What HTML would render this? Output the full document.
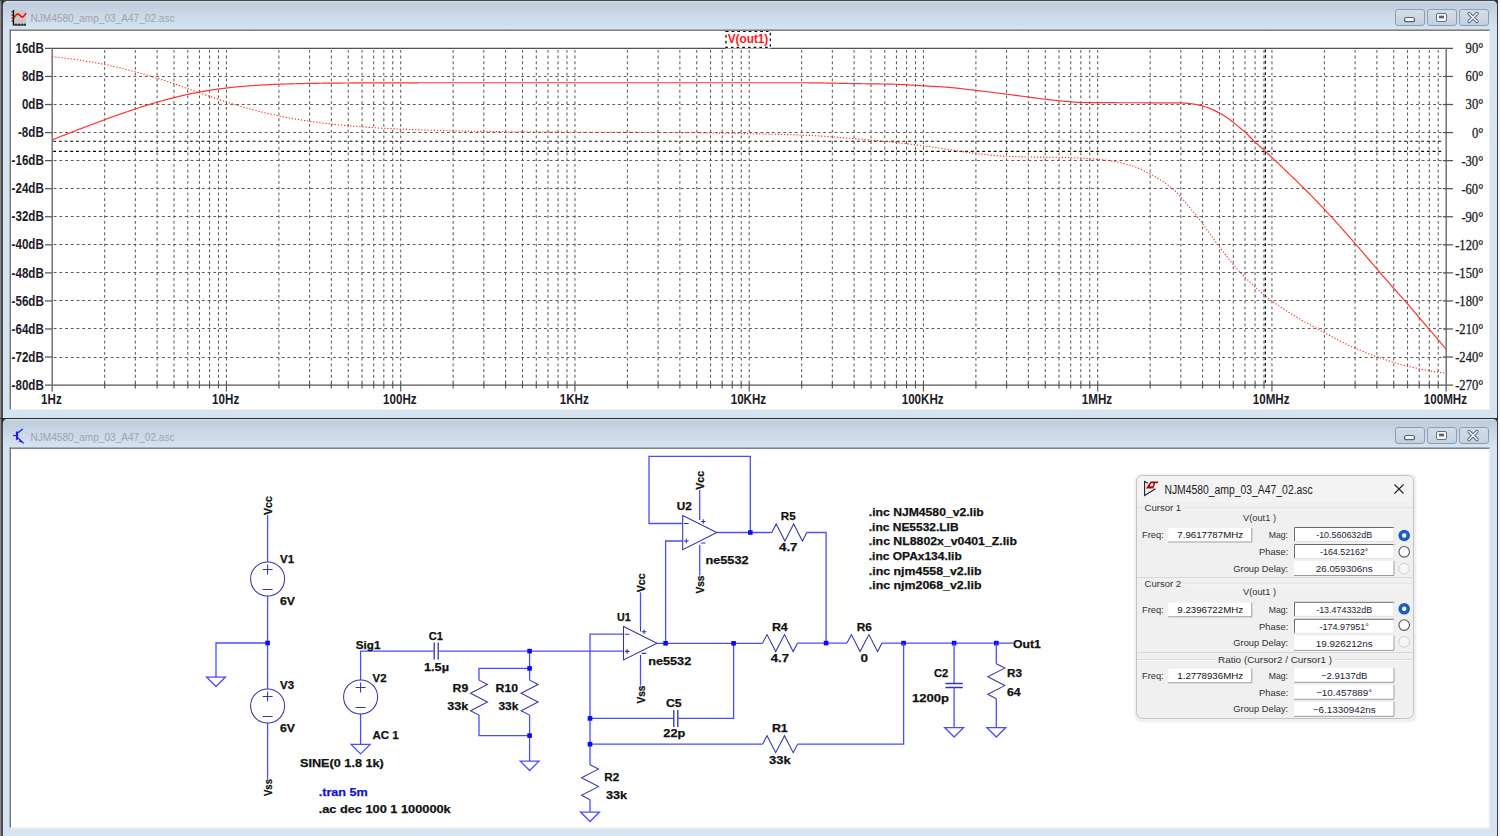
<!DOCTYPE html><html><head><meta charset="utf-8"><style>html,body{margin:0;padding:0;background:#d6e3f1;overflow:hidden}svg{display:block}text{font-family:"Liberation Sans",sans-serif}.b{font-weight:bold}.sf{font-family:"Liberation Serif",serif}</style></head><body>
<svg width="1500" height="836" viewBox="0 0 1500 836">
<defs>
<linearGradient id="tb" x1="0" y1="0" x2="0" y2="1"><stop offset="0" stop-color="#bccbdb"/><stop offset="1" stop-color="#d7e4f2"/></linearGradient>
<linearGradient id="btn" x1="0" y1="0" x2="0" y2="1"><stop offset="0" stop-color="#d3dde8"/><stop offset="1" stop-color="#c2d0df"/></linearGradient>
</defs>
<rect x="0" y="0" width="1500" height="836" fill="#d6e3f1"/>
<rect x="0" y="0" width="1" height="836" fill="#8a8a8a"/><rect x="1" y="0" width="2" height="836" fill="#4a4a4a"/>
<rect x="1497" y="0" width="1" height="836" fill="#3a3a3a"/><rect x="1498" y="0" width="2" height="836" fill="#f4f6f8"/>
<rect x="0" y="0" width="1498" height="1.2" fill="#474747"/>
<rect x="2" y="0.5" width="4" height="4" fill="#2a2a2a"/><rect x="1494" y="0.5" width="3.5" height="4" fill="#2a2a2a"/>
<rect x="3" y="1" width="1494" height="29" rx="4" fill="url(#tb)"/>
<rect x="6" y="1.3" width="1488" height="1" fill="#dce5ef"/>
<rect x="1395.5" y="9.5" width="29" height="16" rx="2.5" fill="url(#btn)" stroke="#8f9db3" stroke-width="1"/>
<rect x="1427.5" y="9.5" width="29" height="16" rx="2.5" fill="url(#btn)" stroke="#8f9db3" stroke-width="1"/>
<rect x="1459.5" y="9.5" width="29" height="16" rx="2.5" fill="url(#btn)" stroke="#8f9db3" stroke-width="1"/>
<rect x="1404.5" y="17.5" width="10" height="4.2" rx="2" fill="#f4f6f8" stroke="#5a6270" stroke-width="1.2"/>
<rect x="1436.5" y="13.5" width="10" height="8" rx="1.5" fill="#f4f6f8" stroke="#5a6270" stroke-width="0.9"/><rect x="1439" y="15.7" width="5" height="2.6" fill="#5a6270"/>
<path d="M1469 13.5 L1477 21.5 M1477 13.5 L1469 21.5" stroke="#5a6270" stroke-width="3.2" stroke-linecap="round"/><path d="M1469 13.5 L1477 21.5 M1477 13.5 L1469 21.5" stroke="#f4f6f8" stroke-width="1.6" stroke-linecap="round"/>
<text x="30.5" y="22" font-size="11.6" fill="#9ea3ad" textLength="144" lengthAdjust="spacingAndGlyphs">NJM4580_amp_03_A47_02.asc</text>
<g><rect x="12" y="10" width="14" height="15" fill="#c8c8c8"/><path d="M13.5 10 V25 H26" stroke="#000" stroke-width="1.2" fill="none"/><path d="M11.5 12h2M11.5 15h2M11.5 18h2M11.5 21h2M16 23.5v2M19 23.5v2M22 23.5v2M25 23.5v2" stroke="#000" stroke-width="1"/><path d="M13.8 18 C16 14,18 13,20 15.5 S24 17,26 13" stroke="#f00" stroke-width="1.6" fill="none"/></g>
<rect x="10" y="30" width="1480" height="380" fill="#ffffff"/>
<rect x="9.6" y="29.5" width="1480" height="1.4" fill="#747474"/><rect x="9.6" y="29.5" width="1.4" height="380" fill="#747474"/>
<rect x="1489" y="31" width="1" height="379" fill="#f0f0f0"/><rect x="11" y="409" width="1479" height="1" fill="#f0f0f0"/>
<rect x="0" y="418" width="1498" height="1" fill="#2e2e2e"/>
<rect x="2" y="418.5" width="4" height="4" fill="#2a2a2a"/><rect x="1494" y="418.5" width="3.5" height="4" fill="#2a2a2a"/>
<rect x="3" y="419" width="1494" height="29" rx="4" fill="url(#tb)"/>
<rect x="6" y="419.3" width="1488" height="1" fill="#dce5ef"/>
<rect x="1395.5" y="427.5" width="29" height="16" rx="2.5" fill="url(#btn)" stroke="#8f9db3" stroke-width="1"/>
<rect x="1427.5" y="427.5" width="29" height="16" rx="2.5" fill="url(#btn)" stroke="#8f9db3" stroke-width="1"/>
<rect x="1459.5" y="427.5" width="29" height="16" rx="2.5" fill="url(#btn)" stroke="#8f9db3" stroke-width="1"/>
<rect x="1404.5" y="435.5" width="10" height="4.2" rx="2" fill="#f4f6f8" stroke="#5a6270" stroke-width="1.2"/>
<rect x="1436.5" y="431.5" width="10" height="8" rx="1.5" fill="#f4f6f8" stroke="#5a6270" stroke-width="0.9"/><rect x="1439" y="433.7" width="5" height="2.6" fill="#5a6270"/>
<path d="M1469 431.5 L1477 439.5 M1477 431.5 L1469 439.5" stroke="#5a6270" stroke-width="3.2" stroke-linecap="round"/><path d="M1469 431.5 L1477 439.5 M1477 431.5 L1469 439.5" stroke="#f4f6f8" stroke-width="1.6" stroke-linecap="round"/>
<text x="30.5" y="440.6" font-size="11.6" fill="#9ea3ad" textLength="144" lengthAdjust="spacingAndGlyphs">NJM4580_amp_03_A47_02.asc</text>
<g stroke="#1a1aff" fill="none"><path d="M17 431.5 V439.8" stroke-width="2.2"/><path d="M13 435.5 H16" stroke-width="1.2"/><path d="M18 432.8 L22.8 429" stroke-width="1.2"/><path d="M18 438 L23.7 443.4" stroke-width="1.2"/></g><path d="M22.5 442.5 L18.6 441.8 L20.6 439.5 Z" fill="#1a1aff"/>
<rect x="10" y="448" width="1480" height="380" fill="#ffffff"/>
<rect x="9.6" y="447.5" width="1480" height="1.4" fill="#747474"/><rect x="9.6" y="447.5" width="1.4" height="380" fill="#747474"/>
<rect x="11" y="827" width="1479" height="2" fill="#efefef"/><rect x="1488.5" y="449" width="1.5" height="380" fill="#efefef"/>
<line x1="104.65" y1="49.9" x2="104.65" y2="385.1" stroke="#5c5c5c" stroke-width="1.05" stroke-dasharray="2.85 2.85"/>
<line x1="135.34" y1="49.9" x2="135.34" y2="385.1" stroke="#5c5c5c" stroke-width="1.05" stroke-dasharray="2.85 2.85"/>
<line x1="157.11" y1="49.9" x2="157.11" y2="385.1" stroke="#5c5c5c" stroke-width="1.05" stroke-dasharray="2.85 2.85"/>
<line x1="174.00" y1="49.9" x2="174.00" y2="385.1" stroke="#5c5c5c" stroke-width="1.05" stroke-dasharray="2.85 2.85"/>
<line x1="187.79" y1="49.9" x2="187.79" y2="385.1" stroke="#5c5c5c" stroke-width="1.05" stroke-dasharray="2.85 2.85"/>
<line x1="199.46" y1="49.9" x2="199.46" y2="385.1" stroke="#5c5c5c" stroke-width="1.05" stroke-dasharray="2.85 2.85"/>
<line x1="209.56" y1="49.9" x2="209.56" y2="385.1" stroke="#5c5c5c" stroke-width="1.05" stroke-dasharray="2.85 2.85"/>
<line x1="218.48" y1="49.9" x2="218.48" y2="385.1" stroke="#5c5c5c" stroke-width="1.05" stroke-dasharray="2.85 2.85"/>
<line x1="226.45" y1="49.9" x2="226.45" y2="385.1" stroke="#5c5c5c" stroke-width="1.05" stroke-dasharray="2.85 2.85"/>
<line x1="278.90" y1="49.9" x2="278.90" y2="385.1" stroke="#5c5c5c" stroke-width="1.05" stroke-dasharray="2.85 2.85"/>
<line x1="309.59" y1="49.9" x2="309.59" y2="385.1" stroke="#5c5c5c" stroke-width="1.05" stroke-dasharray="2.85 2.85"/>
<line x1="331.36" y1="49.9" x2="331.36" y2="385.1" stroke="#5c5c5c" stroke-width="1.05" stroke-dasharray="2.85 2.85"/>
<line x1="348.25" y1="49.9" x2="348.25" y2="385.1" stroke="#5c5c5c" stroke-width="1.05" stroke-dasharray="2.85 2.85"/>
<line x1="362.04" y1="49.9" x2="362.04" y2="385.1" stroke="#5c5c5c" stroke-width="1.05" stroke-dasharray="2.85 2.85"/>
<line x1="373.71" y1="49.9" x2="373.71" y2="385.1" stroke="#5c5c5c" stroke-width="1.05" stroke-dasharray="2.85 2.85"/>
<line x1="383.81" y1="49.9" x2="383.81" y2="385.1" stroke="#5c5c5c" stroke-width="1.05" stroke-dasharray="2.85 2.85"/>
<line x1="392.73" y1="49.9" x2="392.73" y2="385.1" stroke="#5c5c5c" stroke-width="1.05" stroke-dasharray="2.85 2.85"/>
<line x1="400.70" y1="49.9" x2="400.70" y2="385.1" stroke="#5c5c5c" stroke-width="1.05" stroke-dasharray="2.85 2.85"/>
<line x1="453.15" y1="49.9" x2="453.15" y2="385.1" stroke="#5c5c5c" stroke-width="1.05" stroke-dasharray="2.85 2.85"/>
<line x1="483.84" y1="49.9" x2="483.84" y2="385.1" stroke="#5c5c5c" stroke-width="1.05" stroke-dasharray="2.85 2.85"/>
<line x1="505.61" y1="49.9" x2="505.61" y2="385.1" stroke="#5c5c5c" stroke-width="1.05" stroke-dasharray="2.85 2.85"/>
<line x1="522.50" y1="49.9" x2="522.50" y2="385.1" stroke="#5c5c5c" stroke-width="1.05" stroke-dasharray="2.85 2.85"/>
<line x1="536.29" y1="49.9" x2="536.29" y2="385.1" stroke="#5c5c5c" stroke-width="1.05" stroke-dasharray="2.85 2.85"/>
<line x1="547.96" y1="49.9" x2="547.96" y2="385.1" stroke="#5c5c5c" stroke-width="1.05" stroke-dasharray="2.85 2.85"/>
<line x1="558.06" y1="49.9" x2="558.06" y2="385.1" stroke="#5c5c5c" stroke-width="1.05" stroke-dasharray="2.85 2.85"/>
<line x1="566.98" y1="49.9" x2="566.98" y2="385.1" stroke="#5c5c5c" stroke-width="1.05" stroke-dasharray="2.85 2.85"/>
<line x1="574.95" y1="49.9" x2="574.95" y2="385.1" stroke="#5c5c5c" stroke-width="1.05" stroke-dasharray="2.85 2.85"/>
<line x1="627.40" y1="49.9" x2="627.40" y2="385.1" stroke="#5c5c5c" stroke-width="1.05" stroke-dasharray="2.85 2.85"/>
<line x1="658.09" y1="49.9" x2="658.09" y2="385.1" stroke="#5c5c5c" stroke-width="1.05" stroke-dasharray="2.85 2.85"/>
<line x1="679.86" y1="49.9" x2="679.86" y2="385.1" stroke="#5c5c5c" stroke-width="1.05" stroke-dasharray="2.85 2.85"/>
<line x1="696.75" y1="49.9" x2="696.75" y2="385.1" stroke="#5c5c5c" stroke-width="1.05" stroke-dasharray="2.85 2.85"/>
<line x1="710.54" y1="49.9" x2="710.54" y2="385.1" stroke="#5c5c5c" stroke-width="1.05" stroke-dasharray="2.85 2.85"/>
<line x1="722.21" y1="49.9" x2="722.21" y2="385.1" stroke="#5c5c5c" stroke-width="1.05" stroke-dasharray="2.85 2.85"/>
<line x1="732.31" y1="49.9" x2="732.31" y2="385.1" stroke="#5c5c5c" stroke-width="1.05" stroke-dasharray="2.85 2.85"/>
<line x1="741.23" y1="49.9" x2="741.23" y2="385.1" stroke="#5c5c5c" stroke-width="1.05" stroke-dasharray="2.85 2.85"/>
<line x1="749.20" y1="49.9" x2="749.20" y2="385.1" stroke="#5c5c5c" stroke-width="1.05" stroke-dasharray="2.85 2.85"/>
<line x1="801.65" y1="49.9" x2="801.65" y2="385.1" stroke="#5c5c5c" stroke-width="1.05" stroke-dasharray="2.85 2.85"/>
<line x1="832.34" y1="49.9" x2="832.34" y2="385.1" stroke="#5c5c5c" stroke-width="1.05" stroke-dasharray="2.85 2.85"/>
<line x1="854.11" y1="49.9" x2="854.11" y2="385.1" stroke="#5c5c5c" stroke-width="1.05" stroke-dasharray="2.85 2.85"/>
<line x1="871.00" y1="49.9" x2="871.00" y2="385.1" stroke="#5c5c5c" stroke-width="1.05" stroke-dasharray="2.85 2.85"/>
<line x1="884.79" y1="49.9" x2="884.79" y2="385.1" stroke="#5c5c5c" stroke-width="1.05" stroke-dasharray="2.85 2.85"/>
<line x1="896.46" y1="49.9" x2="896.46" y2="385.1" stroke="#5c5c5c" stroke-width="1.05" stroke-dasharray="2.85 2.85"/>
<line x1="906.56" y1="49.9" x2="906.56" y2="385.1" stroke="#5c5c5c" stroke-width="1.05" stroke-dasharray="2.85 2.85"/>
<line x1="915.48" y1="49.9" x2="915.48" y2="385.1" stroke="#5c5c5c" stroke-width="1.05" stroke-dasharray="2.85 2.85"/>
<line x1="923.45" y1="49.9" x2="923.45" y2="385.1" stroke="#5c5c5c" stroke-width="1.05" stroke-dasharray="2.85 2.85"/>
<line x1="975.90" y1="49.9" x2="975.90" y2="385.1" stroke="#5c5c5c" stroke-width="1.05" stroke-dasharray="2.85 2.85"/>
<line x1="1006.59" y1="49.9" x2="1006.59" y2="385.1" stroke="#5c5c5c" stroke-width="1.05" stroke-dasharray="2.85 2.85"/>
<line x1="1028.36" y1="49.9" x2="1028.36" y2="385.1" stroke="#5c5c5c" stroke-width="1.05" stroke-dasharray="2.85 2.85"/>
<line x1="1045.25" y1="49.9" x2="1045.25" y2="385.1" stroke="#5c5c5c" stroke-width="1.05" stroke-dasharray="2.85 2.85"/>
<line x1="1059.04" y1="49.9" x2="1059.04" y2="385.1" stroke="#5c5c5c" stroke-width="1.05" stroke-dasharray="2.85 2.85"/>
<line x1="1070.71" y1="49.9" x2="1070.71" y2="385.1" stroke="#5c5c5c" stroke-width="1.05" stroke-dasharray="2.85 2.85"/>
<line x1="1080.81" y1="49.9" x2="1080.81" y2="385.1" stroke="#5c5c5c" stroke-width="1.05" stroke-dasharray="2.85 2.85"/>
<line x1="1089.73" y1="49.9" x2="1089.73" y2="385.1" stroke="#5c5c5c" stroke-width="1.05" stroke-dasharray="2.85 2.85"/>
<line x1="1097.70" y1="49.9" x2="1097.70" y2="385.1" stroke="#5c5c5c" stroke-width="1.05" stroke-dasharray="2.85 2.85"/>
<line x1="1150.15" y1="49.9" x2="1150.15" y2="385.1" stroke="#5c5c5c" stroke-width="1.05" stroke-dasharray="2.85 2.85"/>
<line x1="1180.84" y1="49.9" x2="1180.84" y2="385.1" stroke="#5c5c5c" stroke-width="1.05" stroke-dasharray="2.85 2.85"/>
<line x1="1202.61" y1="49.9" x2="1202.61" y2="385.1" stroke="#5c5c5c" stroke-width="1.05" stroke-dasharray="2.85 2.85"/>
<line x1="1219.50" y1="49.9" x2="1219.50" y2="385.1" stroke="#5c5c5c" stroke-width="1.05" stroke-dasharray="2.85 2.85"/>
<line x1="1233.29" y1="49.9" x2="1233.29" y2="385.1" stroke="#5c5c5c" stroke-width="1.05" stroke-dasharray="2.85 2.85"/>
<line x1="1244.96" y1="49.9" x2="1244.96" y2="385.1" stroke="#5c5c5c" stroke-width="1.05" stroke-dasharray="2.85 2.85"/>
<line x1="1255.06" y1="49.9" x2="1255.06" y2="385.1" stroke="#5c5c5c" stroke-width="1.05" stroke-dasharray="2.85 2.85"/>
<line x1="1263.98" y1="49.9" x2="1263.98" y2="385.1" stroke="#5c5c5c" stroke-width="1.05" stroke-dasharray="2.85 2.85"/>
<line x1="1271.95" y1="49.9" x2="1271.95" y2="385.1" stroke="#5c5c5c" stroke-width="1.05" stroke-dasharray="2.85 2.85"/>
<line x1="1324.40" y1="49.9" x2="1324.40" y2="385.1" stroke="#5c5c5c" stroke-width="1.05" stroke-dasharray="2.85 2.85"/>
<line x1="1355.09" y1="49.9" x2="1355.09" y2="385.1" stroke="#5c5c5c" stroke-width="1.05" stroke-dasharray="2.85 2.85"/>
<line x1="1376.86" y1="49.9" x2="1376.86" y2="385.1" stroke="#5c5c5c" stroke-width="1.05" stroke-dasharray="2.85 2.85"/>
<line x1="1393.75" y1="49.9" x2="1393.75" y2="385.1" stroke="#5c5c5c" stroke-width="1.05" stroke-dasharray="2.85 2.85"/>
<line x1="1407.54" y1="49.9" x2="1407.54" y2="385.1" stroke="#5c5c5c" stroke-width="1.05" stroke-dasharray="2.85 2.85"/>
<line x1="1419.21" y1="49.9" x2="1419.21" y2="385.1" stroke="#5c5c5c" stroke-width="1.05" stroke-dasharray="2.85 2.85"/>
<line x1="1429.31" y1="49.9" x2="1429.31" y2="385.1" stroke="#5c5c5c" stroke-width="1.05" stroke-dasharray="2.85 2.85"/>
<line x1="1438.23" y1="49.9" x2="1438.23" y2="385.1" stroke="#5c5c5c" stroke-width="1.05" stroke-dasharray="2.85 2.85"/>
<line x1="53.7" y1="76.50" x2="1446.2" y2="76.50" stroke="#5c5c5c" stroke-width="1.05" stroke-dasharray="2.85 2.85"/>
<line x1="53.7" y1="104.50" x2="1446.2" y2="104.50" stroke="#5c5c5c" stroke-width="1.05" stroke-dasharray="2.85 2.85"/>
<line x1="53.7" y1="132.50" x2="1446.2" y2="132.50" stroke="#5c5c5c" stroke-width="1.05" stroke-dasharray="2.85 2.85"/>
<line x1="53.7" y1="160.50" x2="1446.2" y2="160.50" stroke="#5c5c5c" stroke-width="1.05" stroke-dasharray="2.85 2.85"/>
<line x1="53.7" y1="188.50" x2="1446.2" y2="188.50" stroke="#5c5c5c" stroke-width="1.05" stroke-dasharray="2.85 2.85"/>
<line x1="53.7" y1="216.50" x2="1446.2" y2="216.50" stroke="#5c5c5c" stroke-width="1.05" stroke-dasharray="2.85 2.85"/>
<line x1="53.7" y1="244.50" x2="1446.2" y2="244.50" stroke="#5c5c5c" stroke-width="1.05" stroke-dasharray="2.85 2.85"/>
<line x1="53.7" y1="272.50" x2="1446.2" y2="272.50" stroke="#5c5c5c" stroke-width="1.05" stroke-dasharray="2.85 2.85"/>
<line x1="53.7" y1="300.50" x2="1446.2" y2="300.50" stroke="#5c5c5c" stroke-width="1.05" stroke-dasharray="2.85 2.85"/>
<line x1="53.7" y1="328.50" x2="1446.2" y2="328.50" stroke="#5c5c5c" stroke-width="1.05" stroke-dasharray="2.85 2.85"/>
<line x1="53.7" y1="357.50" x2="1446.2" y2="357.50" stroke="#5c5c5c" stroke-width="1.05" stroke-dasharray="2.85 2.85"/>
<line x1="53.2" y1="141.2" x2="1442.7" y2="141.2" stroke="#000" stroke-width="1.1" stroke-dasharray="2.85 2.85"/>
<line x1="53.2" y1="151.4" x2="1442.7" y2="151.4" stroke="#000" stroke-width="1.1" stroke-dasharray="2.85 2.85"/>
<line x1="1265.4" y1="49.4" x2="1265.4" y2="385.1" stroke="#000" stroke-width="1.1" stroke-dasharray="2.85 2.85"/>
<line x1="45" y1="48.4" x2="1453" y2="48.4" stroke="#555555" stroke-width="1.3"/>
<line x1="45" y1="385.1" x2="1453" y2="385.1" stroke="#555555" stroke-width="1.3"/>
<line x1="52.2" y1="48.4" x2="52.2" y2="391.5" stroke="#737373" stroke-width="1.5"/>
<line x1="1446.2" y1="48.4" x2="1446.2" y2="391.5" stroke="#737373" stroke-width="1.5"/>
<line x1="45" y1="76.46" x2="52.2" y2="76.46" stroke="#555555" stroke-width="1.25"/>
<line x1="1443" y1="76.46" x2="1453" y2="76.46" stroke="#555555" stroke-width="1.25"/>
<line x1="45" y1="104.52" x2="52.2" y2="104.52" stroke="#555555" stroke-width="1.25"/>
<line x1="1443" y1="104.52" x2="1453" y2="104.52" stroke="#555555" stroke-width="1.25"/>
<line x1="45" y1="132.58" x2="52.2" y2="132.58" stroke="#555555" stroke-width="1.25"/>
<line x1="1443" y1="132.58" x2="1453" y2="132.58" stroke="#555555" stroke-width="1.25"/>
<line x1="45" y1="160.63" x2="52.2" y2="160.63" stroke="#555555" stroke-width="1.25"/>
<line x1="1443" y1="160.63" x2="1453" y2="160.63" stroke="#555555" stroke-width="1.25"/>
<line x1="45" y1="188.69" x2="52.2" y2="188.69" stroke="#555555" stroke-width="1.25"/>
<line x1="1443" y1="188.69" x2="1453" y2="188.69" stroke="#555555" stroke-width="1.25"/>
<line x1="45" y1="216.75" x2="52.2" y2="216.75" stroke="#555555" stroke-width="1.25"/>
<line x1="1443" y1="216.75" x2="1453" y2="216.75" stroke="#555555" stroke-width="1.25"/>
<line x1="45" y1="244.81" x2="52.2" y2="244.81" stroke="#555555" stroke-width="1.25"/>
<line x1="1443" y1="244.81" x2="1453" y2="244.81" stroke="#555555" stroke-width="1.25"/>
<line x1="45" y1="272.87" x2="52.2" y2="272.87" stroke="#555555" stroke-width="1.25"/>
<line x1="1443" y1="272.87" x2="1453" y2="272.87" stroke="#555555" stroke-width="1.25"/>
<line x1="45" y1="300.93" x2="52.2" y2="300.93" stroke="#555555" stroke-width="1.25"/>
<line x1="1443" y1="300.93" x2="1453" y2="300.93" stroke="#555555" stroke-width="1.25"/>
<line x1="45" y1="328.98" x2="52.2" y2="328.98" stroke="#555555" stroke-width="1.25"/>
<line x1="1443" y1="328.98" x2="1453" y2="328.98" stroke="#555555" stroke-width="1.25"/>
<line x1="45" y1="357.04" x2="52.2" y2="357.04" stroke="#555555" stroke-width="1.25"/>
<line x1="1443" y1="357.04" x2="1453" y2="357.04" stroke="#555555" stroke-width="1.25"/>
<line x1="104.65" y1="382.8" x2="104.65" y2="388.4" stroke="#555555" stroke-width="1.15"/>
<line x1="135.34" y1="382.8" x2="135.34" y2="388.4" stroke="#555555" stroke-width="1.15"/>
<line x1="157.11" y1="382.8" x2="157.11" y2="388.4" stroke="#555555" stroke-width="1.15"/>
<line x1="174.00" y1="382.8" x2="174.00" y2="388.4" stroke="#555555" stroke-width="1.15"/>
<line x1="187.79" y1="382.8" x2="187.79" y2="388.4" stroke="#555555" stroke-width="1.15"/>
<line x1="199.46" y1="382.8" x2="199.46" y2="388.4" stroke="#555555" stroke-width="1.15"/>
<line x1="209.56" y1="382.8" x2="209.56" y2="388.4" stroke="#555555" stroke-width="1.15"/>
<line x1="218.48" y1="382.8" x2="218.48" y2="388.4" stroke="#555555" stroke-width="1.15"/>
<line x1="226.45" y1="382.8" x2="226.45" y2="391.5" stroke="#555555" stroke-width="1.15"/>
<line x1="278.90" y1="382.8" x2="278.90" y2="388.4" stroke="#555555" stroke-width="1.15"/>
<line x1="309.59" y1="382.8" x2="309.59" y2="388.4" stroke="#555555" stroke-width="1.15"/>
<line x1="331.36" y1="382.8" x2="331.36" y2="388.4" stroke="#555555" stroke-width="1.15"/>
<line x1="348.25" y1="382.8" x2="348.25" y2="388.4" stroke="#555555" stroke-width="1.15"/>
<line x1="362.04" y1="382.8" x2="362.04" y2="388.4" stroke="#555555" stroke-width="1.15"/>
<line x1="373.71" y1="382.8" x2="373.71" y2="388.4" stroke="#555555" stroke-width="1.15"/>
<line x1="383.81" y1="382.8" x2="383.81" y2="388.4" stroke="#555555" stroke-width="1.15"/>
<line x1="392.73" y1="382.8" x2="392.73" y2="388.4" stroke="#555555" stroke-width="1.15"/>
<line x1="400.70" y1="382.8" x2="400.70" y2="391.5" stroke="#555555" stroke-width="1.15"/>
<line x1="453.15" y1="382.8" x2="453.15" y2="388.4" stroke="#555555" stroke-width="1.15"/>
<line x1="483.84" y1="382.8" x2="483.84" y2="388.4" stroke="#555555" stroke-width="1.15"/>
<line x1="505.61" y1="382.8" x2="505.61" y2="388.4" stroke="#555555" stroke-width="1.15"/>
<line x1="522.50" y1="382.8" x2="522.50" y2="388.4" stroke="#555555" stroke-width="1.15"/>
<line x1="536.29" y1="382.8" x2="536.29" y2="388.4" stroke="#555555" stroke-width="1.15"/>
<line x1="547.96" y1="382.8" x2="547.96" y2="388.4" stroke="#555555" stroke-width="1.15"/>
<line x1="558.06" y1="382.8" x2="558.06" y2="388.4" stroke="#555555" stroke-width="1.15"/>
<line x1="566.98" y1="382.8" x2="566.98" y2="388.4" stroke="#555555" stroke-width="1.15"/>
<line x1="574.95" y1="382.8" x2="574.95" y2="391.5" stroke="#555555" stroke-width="1.15"/>
<line x1="627.40" y1="382.8" x2="627.40" y2="388.4" stroke="#555555" stroke-width="1.15"/>
<line x1="658.09" y1="382.8" x2="658.09" y2="388.4" stroke="#555555" stroke-width="1.15"/>
<line x1="679.86" y1="382.8" x2="679.86" y2="388.4" stroke="#555555" stroke-width="1.15"/>
<line x1="696.75" y1="382.8" x2="696.75" y2="388.4" stroke="#555555" stroke-width="1.15"/>
<line x1="710.54" y1="382.8" x2="710.54" y2="388.4" stroke="#555555" stroke-width="1.15"/>
<line x1="722.21" y1="382.8" x2="722.21" y2="388.4" stroke="#555555" stroke-width="1.15"/>
<line x1="732.31" y1="382.8" x2="732.31" y2="388.4" stroke="#555555" stroke-width="1.15"/>
<line x1="741.23" y1="382.8" x2="741.23" y2="388.4" stroke="#555555" stroke-width="1.15"/>
<line x1="749.20" y1="382.8" x2="749.20" y2="391.5" stroke="#555555" stroke-width="1.15"/>
<line x1="801.65" y1="382.8" x2="801.65" y2="388.4" stroke="#555555" stroke-width="1.15"/>
<line x1="832.34" y1="382.8" x2="832.34" y2="388.4" stroke="#555555" stroke-width="1.15"/>
<line x1="854.11" y1="382.8" x2="854.11" y2="388.4" stroke="#555555" stroke-width="1.15"/>
<line x1="871.00" y1="382.8" x2="871.00" y2="388.4" stroke="#555555" stroke-width="1.15"/>
<line x1="884.79" y1="382.8" x2="884.79" y2="388.4" stroke="#555555" stroke-width="1.15"/>
<line x1="896.46" y1="382.8" x2="896.46" y2="388.4" stroke="#555555" stroke-width="1.15"/>
<line x1="906.56" y1="382.8" x2="906.56" y2="388.4" stroke="#555555" stroke-width="1.15"/>
<line x1="915.48" y1="382.8" x2="915.48" y2="388.4" stroke="#555555" stroke-width="1.15"/>
<line x1="923.45" y1="382.8" x2="923.45" y2="391.5" stroke="#555555" stroke-width="1.15"/>
<line x1="975.90" y1="382.8" x2="975.90" y2="388.4" stroke="#555555" stroke-width="1.15"/>
<line x1="1006.59" y1="382.8" x2="1006.59" y2="388.4" stroke="#555555" stroke-width="1.15"/>
<line x1="1028.36" y1="382.8" x2="1028.36" y2="388.4" stroke="#555555" stroke-width="1.15"/>
<line x1="1045.25" y1="382.8" x2="1045.25" y2="388.4" stroke="#555555" stroke-width="1.15"/>
<line x1="1059.04" y1="382.8" x2="1059.04" y2="388.4" stroke="#555555" stroke-width="1.15"/>
<line x1="1070.71" y1="382.8" x2="1070.71" y2="388.4" stroke="#555555" stroke-width="1.15"/>
<line x1="1080.81" y1="382.8" x2="1080.81" y2="388.4" stroke="#555555" stroke-width="1.15"/>
<line x1="1089.73" y1="382.8" x2="1089.73" y2="388.4" stroke="#555555" stroke-width="1.15"/>
<line x1="1097.70" y1="382.8" x2="1097.70" y2="391.5" stroke="#555555" stroke-width="1.15"/>
<line x1="1150.15" y1="382.8" x2="1150.15" y2="388.4" stroke="#555555" stroke-width="1.15"/>
<line x1="1180.84" y1="382.8" x2="1180.84" y2="388.4" stroke="#555555" stroke-width="1.15"/>
<line x1="1202.61" y1="382.8" x2="1202.61" y2="388.4" stroke="#555555" stroke-width="1.15"/>
<line x1="1219.50" y1="382.8" x2="1219.50" y2="388.4" stroke="#555555" stroke-width="1.15"/>
<line x1="1233.29" y1="382.8" x2="1233.29" y2="388.4" stroke="#555555" stroke-width="1.15"/>
<line x1="1244.96" y1="382.8" x2="1244.96" y2="388.4" stroke="#555555" stroke-width="1.15"/>
<line x1="1255.06" y1="382.8" x2="1255.06" y2="388.4" stroke="#555555" stroke-width="1.15"/>
<line x1="1263.98" y1="382.8" x2="1263.98" y2="388.4" stroke="#555555" stroke-width="1.15"/>
<line x1="1271.95" y1="382.8" x2="1271.95" y2="391.5" stroke="#555555" stroke-width="1.15"/>
<line x1="1324.40" y1="382.8" x2="1324.40" y2="388.4" stroke="#555555" stroke-width="1.15"/>
<line x1="1355.09" y1="382.8" x2="1355.09" y2="388.4" stroke="#555555" stroke-width="1.15"/>
<line x1="1376.86" y1="382.8" x2="1376.86" y2="388.4" stroke="#555555" stroke-width="1.15"/>
<line x1="1393.75" y1="382.8" x2="1393.75" y2="388.4" stroke="#555555" stroke-width="1.15"/>
<line x1="1407.54" y1="382.8" x2="1407.54" y2="388.4" stroke="#555555" stroke-width="1.15"/>
<line x1="1419.21" y1="382.8" x2="1419.21" y2="388.4" stroke="#555555" stroke-width="1.15"/>
<line x1="1429.31" y1="382.8" x2="1429.31" y2="388.4" stroke="#555555" stroke-width="1.15"/>
<line x1="1438.23" y1="382.8" x2="1438.23" y2="388.4" stroke="#555555" stroke-width="1.15"/>
<text class="b" x="15.5" y="53.0" font-size="13.8" fill="#1c1c28" textLength="28.3" lengthAdjust="spacingAndGlyphs">16dB</text>
<text class="b" x="21.9" y="81.1" font-size="13.8" fill="#1c1c28" textLength="21.9" lengthAdjust="spacingAndGlyphs">8dB</text>
<text class="b" x="21.9" y="109.1" font-size="13.8" fill="#1c1c28" textLength="21.9" lengthAdjust="spacingAndGlyphs">0dB</text>
<text class="b" x="18.0" y="137.2" font-size="13.8" fill="#1c1c28" textLength="25.8" lengthAdjust="spacingAndGlyphs">-8dB</text>
<text class="b" x="11.6" y="165.2" font-size="13.8" fill="#1c1c28" textLength="32.2" lengthAdjust="spacingAndGlyphs">-16dB</text>
<text class="b" x="11.6" y="193.3" font-size="13.8" fill="#1c1c28" textLength="32.2" lengthAdjust="spacingAndGlyphs">-24dB</text>
<text class="b" x="11.6" y="221.4" font-size="13.8" fill="#1c1c28" textLength="32.2" lengthAdjust="spacingAndGlyphs">-32dB</text>
<text class="b" x="11.6" y="249.4" font-size="13.8" fill="#1c1c28" textLength="32.2" lengthAdjust="spacingAndGlyphs">-40dB</text>
<text class="b" x="11.6" y="277.5" font-size="13.8" fill="#1c1c28" textLength="32.2" lengthAdjust="spacingAndGlyphs">-48dB</text>
<text class="b" x="11.6" y="305.5" font-size="13.8" fill="#1c1c28" textLength="32.2" lengthAdjust="spacingAndGlyphs">-56dB</text>
<text class="b" x="11.6" y="333.6" font-size="13.8" fill="#1c1c28" textLength="32.2" lengthAdjust="spacingAndGlyphs">-64dB</text>
<text class="b" x="11.6" y="361.6" font-size="13.8" fill="#1c1c28" textLength="32.2" lengthAdjust="spacingAndGlyphs">-72dB</text>
<text class="b" x="11.6" y="389.7" font-size="13.8" fill="#1c1c28" textLength="32.2" lengthAdjust="spacingAndGlyphs">-80dB</text>
<text class="sf" x="1465.6" y="53.3" font-size="13.8" fill="#1c1c28" stroke="#1c1c28" stroke-width="0.3" textLength="17.6" lengthAdjust="spacingAndGlyphs">90°</text>
<text class="sf" x="1465.6" y="81.4" font-size="13.8" fill="#1c1c28" stroke="#1c1c28" stroke-width="0.3" textLength="17.6" lengthAdjust="spacingAndGlyphs">60°</text>
<text class="sf" x="1465.6" y="109.4" font-size="13.8" fill="#1c1c28" stroke="#1c1c28" stroke-width="0.3" textLength="17.6" lengthAdjust="spacingAndGlyphs">30°</text>
<text class="sf" x="1471.9" y="137.5" font-size="13.8" fill="#1c1c28" stroke="#1c1c28" stroke-width="0.3" textLength="11.3" lengthAdjust="spacingAndGlyphs">0°</text>
<text class="sf" x="1461.4" y="165.5" font-size="13.8" fill="#1c1c28" stroke="#1c1c28" stroke-width="0.3" textLength="21.8" lengthAdjust="spacingAndGlyphs">-30°</text>
<text class="sf" x="1461.4" y="193.6" font-size="13.8" fill="#1c1c28" stroke="#1c1c28" stroke-width="0.3" textLength="21.8" lengthAdjust="spacingAndGlyphs">-60°</text>
<text class="sf" x="1461.4" y="221.7" font-size="13.8" fill="#1c1c28" stroke="#1c1c28" stroke-width="0.3" textLength="21.8" lengthAdjust="spacingAndGlyphs">-90°</text>
<text class="sf" x="1455.2" y="249.7" font-size="13.8" fill="#1c1c28" stroke="#1c1c28" stroke-width="0.3" textLength="28.0" lengthAdjust="spacingAndGlyphs">-120°</text>
<text class="sf" x="1455.2" y="277.8" font-size="13.8" fill="#1c1c28" stroke="#1c1c28" stroke-width="0.3" textLength="28.0" lengthAdjust="spacingAndGlyphs">-150°</text>
<text class="sf" x="1455.2" y="305.8" font-size="13.8" fill="#1c1c28" stroke="#1c1c28" stroke-width="0.3" textLength="28.0" lengthAdjust="spacingAndGlyphs">-180°</text>
<text class="sf" x="1455.2" y="333.9" font-size="13.8" fill="#1c1c28" stroke="#1c1c28" stroke-width="0.3" textLength="28.0" lengthAdjust="spacingAndGlyphs">-210°</text>
<text class="sf" x="1455.2" y="361.9" font-size="13.8" fill="#1c1c28" stroke="#1c1c28" stroke-width="0.3" textLength="28.0" lengthAdjust="spacingAndGlyphs">-240°</text>
<text class="sf" x="1455.2" y="390.0" font-size="13.8" fill="#1c1c28" stroke="#1c1c28" stroke-width="0.3" textLength="28.0" lengthAdjust="spacingAndGlyphs">-270°</text>
<text class="b" x="41.1" y="404.4" font-size="13.8" fill="#1c1c28" textLength="20.6" lengthAdjust="spacingAndGlyphs">1Hz</text>
<text class="b" x="212.1" y="404.4" font-size="13.8" fill="#1c1c28" textLength="27.1" lengthAdjust="spacingAndGlyphs">10Hz</text>
<text class="b" x="383.1" y="404.4" font-size="13.8" fill="#1c1c28" textLength="33.5" lengthAdjust="spacingAndGlyphs">100Hz</text>
<text class="b" x="559.7" y="404.4" font-size="13.8" fill="#1c1c28" textLength="29.0" lengthAdjust="spacingAndGlyphs">1KHz</text>
<text class="b" x="730.7" y="404.4" font-size="13.8" fill="#1c1c28" textLength="35.4" lengthAdjust="spacingAndGlyphs">10KHz</text>
<text class="b" x="901.7" y="404.4" font-size="13.8" fill="#1c1c28" textLength="41.9" lengthAdjust="spacingAndGlyphs">100KHz</text>
<text class="b" x="1081.8" y="404.4" font-size="13.8" fill="#1c1c28" textLength="30.3" lengthAdjust="spacingAndGlyphs">1MHz</text>
<text class="b" x="1252.8" y="404.4" font-size="13.8" fill="#1c1c28" textLength="36.7" lengthAdjust="spacingAndGlyphs">10MHz</text>
<text class="b" x="1423.8" y="404.4" font-size="13.8" fill="#1c1c28" textLength="43.2" lengthAdjust="spacingAndGlyphs">100MHz</text>
<path d="M52.2 56.67 L53.2 56.78 L54.2 56.89 L55.2 57.00 L56.2 57.11 L57.2 57.22 L58.2 57.34 L59.2 57.45 L60.2 57.57 L61.2 57.69 L62.2 57.81 L63.2 57.94 L64.2 58.06 L65.2 58.19 L66.2 58.31 L67.2 58.44 L68.2 58.57 L69.2 58.70 L70.2 58.84 L71.2 58.97 L72.2 59.11 L73.2 59.25 L74.2 59.39 L75.2 59.53 L76.2 59.67 L77.2 59.82 L78.2 59.97 L79.2 60.12 L80.2 60.27 L81.2 60.42 L82.2 60.57 L83.2 60.73 L84.2 60.89 L85.2 61.05 L86.2 61.21 L87.2 61.38 L88.2 61.54 L89.2 61.71 L90.2 61.88 L91.2 62.05 L92.2 62.22 L93.2 62.40 L94.2 62.58 L95.2 62.76 L96.2 62.94 L97.2 63.12 L98.2 63.31 L99.2 63.50 L100.2 63.69 L101.2 63.88 L102.2 64.07 L103.2 64.27 L104.2 64.47 L105.2 64.67 L106.2 64.87 L107.2 65.08 L108.2 65.29 L109.2 65.50 L110.2 65.71 L111.2 65.92 L112.2 66.14 L113.2 66.36 L114.2 66.58 L115.2 66.80 L116.2 67.03 L117.2 67.25 L118.2 67.49 L119.2 67.72 L120.2 67.95 L121.2 68.19 L122.2 68.43 L123.2 68.67 L124.2 68.92 L125.2 69.16 L126.2 69.41 L127.2 69.66 L128.2 69.92 L129.2 70.17 L130.2 70.43 L131.2 70.69 L132.2 70.95 L133.2 71.22 L134.2 71.49 L135.2 71.76 L136.2 72.03 L137.2 72.30 L138.2 72.58 L139.2 72.86 L140.2 73.14 L141.2 73.42 L142.2 73.71 L143.2 74.00 L144.2 74.29 L145.2 74.58 L146.2 74.87 L147.2 75.17 L148.2 75.47 L149.2 75.77 L150.2 76.07 L151.2 76.38 L152.2 76.69 L153.2 76.99 L154.2 77.31 L155.2 77.62 L156.2 77.93 L157.2 78.25 L158.2 78.57 L159.2 78.89 L160.2 79.21 L161.2 79.54 L162.2 79.86 L163.2 80.19 L164.2 80.52 L165.2 80.85 L166.2 81.18 L167.2 81.51 L168.2 81.85 L169.2 82.19 L170.2 82.52 L171.2 82.86 L172.2 83.20 L173.2 83.55 L174.2 83.89 L175.2 84.23 L176.2 84.58 L177.2 84.92 L178.2 85.27 L179.2 85.62 L180.2 85.97 L181.2 86.32 L182.2 86.67 L183.2 87.02 L184.2 87.37 L185.2 87.72 L186.2 88.07 L187.2 88.43 L188.2 88.78 L189.2 89.13 L190.2 89.49 L191.2 89.84 L192.2 90.19 L193.2 90.55 L194.2 90.90 L195.2 91.26 L196.2 91.61 L197.2 91.96 L198.2 92.32 L199.2 92.67 L200.2 93.02 L201.2 93.37 L202.2 93.73 L203.2 94.08 L204.2 94.43 L205.2 94.78 L206.2 95.13 L207.2 95.48 L208.2 95.82 L209.2 96.17 L210.2 96.51 L211.2 96.86 L212.2 97.20 L213.2 97.55 L214.2 97.89 L215.2 98.23 L216.2 98.57 L217.2 98.90 L218.2 99.24 L219.2 99.57 L220.2 99.91 L221.2 100.24 L222.2 100.57 L223.2 100.90 L224.2 101.22 L225.2 101.55 L226.2 101.87 L227.2 102.19 L228.2 102.51 L229.2 102.83 L230.2 103.15 L231.2 103.46 L232.2 103.78 L233.2 104.09 L234.2 104.39 L235.2 104.70 L236.2 105.00 L237.2 105.31 L238.2 105.61 L239.2 105.91 L240.2 106.20 L241.2 106.50 L242.2 106.79 L243.2 107.08 L244.2 107.36 L245.2 107.65 L246.2 107.93 L247.2 108.21 L248.2 108.49 L249.2 108.77 L250.2 109.04 L251.2 109.31 L252.2 109.58 L253.2 109.85 L254.2 110.11 L255.2 110.37 L256.2 110.63 L257.2 110.89 L258.2 111.15 L259.2 111.40 L260.2 111.65 L261.2 111.90 L262.2 112.14 L263.2 112.39 L264.2 112.63 L265.2 112.87 L266.2 113.10 L267.2 113.34 L268.2 113.57 L269.2 113.80 L270.2 114.02 L271.2 114.25 L272.2 114.47 L273.2 114.69 L274.2 114.91 L275.2 115.13 L276.2 115.34 L277.2 115.55 L278.2 115.76 L279.2 115.97 L280.2 116.17 L281.2 116.37 L282.2 116.57 L283.2 116.77 L284.2 116.97 L285.2 117.16 L286.2 117.35 L287.2 117.54 L288.2 117.73 L289.2 117.92 L290.2 118.10 L291.2 118.28 L292.2 118.46 L293.2 118.64 L294.2 118.81 L295.2 118.98 L296.2 119.15 L297.2 119.32 L298.2 119.49 L299.2 119.66 L300.2 119.82 L301.2 119.98 L302.2 120.14 L303.2 120.30 L304.2 120.45 L305.2 120.61 L306.2 120.76 L307.2 120.91 L308.2 121.06 L309.2 121.20 L310.2 121.35 L311.2 121.49 L312.2 121.63 L313.2 121.77 L314.2 121.91 L315.2 122.05 L316.2 122.18 L317.2 122.32 L318.2 122.45 L319.2 122.58 L320.2 122.71 L321.2 122.83 L322.2 122.96 L323.2 123.08 L324.2 123.20 L325.2 123.32 L326.2 123.44 L327.2 123.56 L328.2 123.68 L329.2 123.79 L330.2 123.90 L331.2 124.02 L332.2 124.13 L333.2 124.24 L334.2 124.34 L335.2 124.45 L336.2 124.56 L337.2 124.66 L338.2 124.76 L339.2 124.86 L340.2 124.96 L341.2 125.06 L342.2 125.16 L343.2 125.25 L344.2 125.35 L345.2 125.44 L346.2 125.54 L347.2 125.63 L348.2 125.72 L349.2 125.81 L350.2 125.89 L351.2 125.98 L352.2 126.07 L353.2 126.15 L354.2 126.23 L355.2 126.32 L356.2 126.40 L357.2 126.48 L358.2 126.56 L359.2 126.64 L360.2 126.71 L361.2 126.79 L362.2 126.87 L363.2 126.94 L364.2 127.01 L365.2 127.09 L366.2 127.16 L367.2 127.23 L368.2 127.30 L369.2 127.37 L370.2 127.43 L371.2 127.50 L372.2 127.57 L373.2 127.63 L374.2 127.70 L375.2 127.76 L376.2 127.82 L377.2 127.89 L378.2 127.95 L379.2 128.01 L380.2 128.07 L381.2 128.13 L382.2 128.18 L383.2 128.24 L384.2 128.30 L385.2 128.35 L386.2 128.41 L387.2 128.46 L388.2 128.52 L389.2 128.57 L390.2 128.62 L391.2 128.68 L392.2 128.73 L393.2 128.78 L394.2 128.83 L395.2 128.88 L396.2 128.92 L397.2 128.97 L398.2 129.02 L399.2 129.07 L400.2 129.11 L401.2 129.16 L402.2 129.20 L403.2 129.25 L404.2 129.29 L405.2 129.33 L406.2 129.37 L407.2 129.42 L408.2 129.46 L409.2 129.50 L410.2 129.54 L411.2 129.58 L412.2 129.62 L413.2 129.66 L414.2 129.70 L415.2 129.73 L416.2 129.77 L417.2 129.81 L418.2 129.84 L419.2 129.88 L420.2 129.91 L421.2 129.95 L422.2 129.98 L423.2 130.02 L424.2 130.05 L425.2 130.08 L426.2 130.12 L427.2 130.15 L428.2 130.18 L429.2 130.21 L430.2 130.24 L431.2 130.27 L432.2 130.30 L433.2 130.33 L434.2 130.36 L435.2 130.39 L436.2 130.42 L437.2 130.45 L438.2 130.48 L439.2 130.50 L440.2 130.53 L441.2 130.56 L442.2 130.58 L443.2 130.61 L444.2 130.64 L445.2 130.66 L446.2 130.69 L447.2 130.71 L448.2 130.74 L449.2 130.76 L450.2 130.78 L451.2 130.81 L452.2 130.83 L453.2 130.85 L454.2 130.88 L455.2 130.90 L456.2 130.92 L457.2 130.94 L458.2 130.96 L459.2 130.98 L460.2 131.01 L461.2 131.03 L462.2 131.05 L463.2 131.07 L464.2 131.09 L465.2 131.11 L466.2 131.13 L467.2 131.14 L468.2 131.16 L469.2 131.18 L470.2 131.20 L471.2 131.22 L472.2 131.24 L473.2 131.25 L474.2 131.27 L475.2 131.29 L476.2 131.30 L477.2 131.32 L478.2 131.34 L479.2 131.35 L480.2 131.37 L481.2 131.39 L482.2 131.40 L483.2 131.42 L484.2 131.43 L485.2 131.45 L486.2 131.46 L487.2 131.48 L488.2 131.49 L489.2 131.51 L490.2 131.52 L491.2 131.53 L492.2 131.55 L493.2 131.56 L494.2 131.57 L495.2 131.59 L496.2 131.60 L497.2 131.61 L498.2 131.63 L499.2 131.64 L500.2 131.65 L501.2 131.66 L502.2 131.67 L503.2 131.69 L504.2 131.70 L505.2 131.71 L506.2 131.72 L507.2 131.73 L508.2 131.74 L509.2 131.75 L510.2 131.76 L511.2 131.77 L512.2 131.79 L513.2 131.80 L514.2 131.81 L515.2 131.82 L516.2 131.83 L517.2 131.84 L518.2 131.85 L519.2 131.86 L520.2 131.86 L521.2 131.87 L522.2 131.88 L523.2 131.89 L524.2 131.90 L525.2 131.91 L526.2 131.92 L527.2 131.93 L528.2 131.94 L529.2 131.94 L530.2 131.95 L531.2 131.96 L532.2 131.97 L533.2 131.98 L534.2 131.98 L535.2 131.99 L536.2 132.00 L537.2 132.01 L538.2 132.02 L539.2 132.02 L540.2 132.03 L541.2 132.04 L542.2 132.04 L543.2 132.05 L544.2 132.06 L545.2 132.06 L546.2 132.07 L547.2 132.08 L548.2 132.08 L549.2 132.09 L550.2 132.10 L551.2 132.10 L552.2 132.11 L553.2 132.12 L554.2 132.12 L555.2 132.13 L556.2 132.13 L557.2 132.14 L558.2 132.15 L559.2 132.15 L560.2 132.16 L561.2 132.16 L562.2 132.17 L563.2 132.17 L564.2 132.18 L565.2 132.18 L566.2 132.19 L567.2 132.19 L568.2 132.20 L569.2 132.20 L570.2 132.21 L571.2 132.21 L572.2 132.22 L573.2 132.22 L574.2 132.23 L575.2 132.23 L576.2 132.24 L577.2 132.24 L578.2 132.24 L579.2 132.25 L580.2 132.25 L581.2 132.26 L582.2 132.26 L583.2 132.27 L584.2 132.27 L585.2 132.27 L586.2 132.28 L587.2 132.28 L588.2 132.29 L589.2 132.29 L590.2 132.29 L591.2 132.30 L592.2 132.30 L593.2 132.30 L594.2 132.31 L595.2 132.31 L596.2 132.31 L597.2 132.32 L598.2 132.32 L599.2 132.32 L600.2 132.33 L601.2 132.33 L602.2 132.33 L603.2 132.34 L604.2 132.34 L605.2 132.34 L606.2 132.35 L607.2 132.35 L608.2 132.35 L609.2 132.36 L610.2 132.36 L611.2 132.36 L612.2 132.36 L613.2 132.37 L614.2 132.37 L615.2 132.37 L616.2 132.38 L617.2 132.38 L618.2 132.38 L619.2 132.38 L620.2 132.39 L621.2 132.39 L622.2 132.39 L623.2 132.39 L624.2 132.40 L625.2 132.40 L626.2 132.40 L627.2 132.40 L628.2 132.40 L629.2 132.41 L630.2 132.41 L631.2 132.41 L632.2 132.41 L633.2 132.42 L634.2 132.42 L635.2 132.42 L636.2 132.42 L637.2 132.42 L638.2 132.43 L639.2 132.43 L640.2 132.43 L641.2 132.43 L642.2 132.43 L643.2 132.44 L644.2 132.44 L645.2 132.44 L646.2 132.44 L647.2 132.44 L648.2 132.44 L649.2 132.45 L650.2 132.45 L651.2 132.45 L652.2 132.45 L653.2 132.45 L654.2 132.46 L655.2 132.46 L656.2 132.46 L657.2 132.47 L658.2 132.47 L659.2 132.47 L660.2 132.48 L661.2 132.48 L662.2 132.49 L663.2 132.49 L664.2 132.50 L665.2 132.50 L666.2 132.51 L667.2 132.51 L668.2 132.52 L669.2 132.52 L670.2 132.53 L671.2 132.54 L672.2 132.54 L673.2 132.55 L674.2 132.56 L675.2 132.56 L676.2 132.57 L677.2 132.58 L678.2 132.59 L679.2 132.60 L680.2 132.61 L681.2 132.61 L682.2 132.62 L683.2 132.63 L684.2 132.64 L685.2 132.65 L686.2 132.66 L687.2 132.67 L688.2 132.68 L689.2 132.69 L690.2 132.70 L691.2 132.71 L692.2 132.73 L693.2 132.74 L694.2 132.75 L695.2 132.76 L696.2 132.77 L697.2 132.78 L698.2 132.80 L699.2 132.81 L700.2 132.82 L701.2 132.84 L702.2 132.85 L703.2 132.86 L704.2 132.88 L705.2 132.89 L706.2 132.90 L707.2 132.92 L708.2 132.93 L709.2 132.95 L710.2 132.96 L711.2 132.98 L712.2 132.99 L713.2 133.01 L714.2 133.02 L715.2 133.04 L716.2 133.06 L717.2 133.07 L718.2 133.09 L719.2 133.11 L720.2 133.12 L721.2 133.14 L722.2 133.16 L723.2 133.17 L724.2 133.19 L725.2 133.21 L726.2 133.23 L727.2 133.25 L728.2 133.26 L729.2 133.28 L730.2 133.30 L731.2 133.32 L732.2 133.34 L733.2 133.36 L734.2 133.38 L735.2 133.40 L736.2 133.42 L737.2 133.44 L738.2 133.46 L739.2 133.48 L740.2 133.50 L741.2 133.52 L742.2 133.54 L743.2 133.56 L744.2 133.58 L745.2 133.60 L746.2 133.62 L747.2 133.64 L748.2 133.67 L749.2 133.69 L750.2 133.71 L751.2 133.73 L752.2 133.76 L753.2 133.78 L754.2 133.80 L755.2 133.82 L756.2 133.85 L757.2 133.87 L758.2 133.89 L759.2 133.92 L760.2 133.94 L761.2 133.96 L762.2 133.99 L763.2 134.01 L764.2 134.04 L765.2 134.06 L766.2 134.09 L767.2 134.11 L768.2 134.14 L769.2 134.16 L770.2 134.19 L771.2 134.21 L772.2 134.24 L773.2 134.26 L774.2 134.29 L775.2 134.31 L776.2 134.34 L777.2 134.37 L778.2 134.39 L779.2 134.42 L780.2 134.45 L781.2 134.47 L782.2 134.50 L783.2 134.53 L784.2 134.55 L785.2 134.58 L786.2 134.61 L787.2 134.64 L788.2 134.66 L789.2 134.69 L790.2 134.72 L791.2 134.75 L792.2 134.78 L793.2 134.80 L794.2 134.83 L795.2 134.86 L796.2 134.89 L797.2 134.92 L798.2 134.95 L799.2 134.98 L800.2 135.01 L801.2 135.04 L802.2 135.07 L803.2 135.11 L804.2 135.14 L805.2 135.18 L806.2 135.22 L807.2 135.27 L808.2 135.31 L809.2 135.36 L810.2 135.41 L811.2 135.46 L812.2 135.52 L813.2 135.57 L814.2 135.63 L815.2 135.69 L816.2 135.75 L817.2 135.81 L818.2 135.87 L819.2 135.94 L820.2 136.01 L821.2 136.07 L822.2 136.14 L823.2 136.21 L824.2 136.28 L825.2 136.36 L826.2 136.43 L827.2 136.50 L828.2 136.58 L829.2 136.66 L830.2 136.73 L831.2 136.81 L832.2 136.89 L833.2 136.97 L834.2 137.05 L835.2 137.13 L836.2 137.21 L837.2 137.30 L838.2 137.38 L839.2 137.46 L840.2 137.55 L841.2 137.63 L842.2 137.71 L843.2 137.80 L844.2 137.88 L845.2 137.97 L846.2 138.05 L847.2 138.14 L848.2 138.22 L849.2 138.31 L850.2 138.39 L851.2 138.47 L852.2 138.56 L853.2 138.64 L854.2 138.73 L855.2 138.81 L856.2 138.89 L857.2 138.97 L858.2 139.05 L859.2 139.14 L860.2 139.22 L861.2 139.30 L862.2 139.38 L863.2 139.46 L864.2 139.54 L865.2 139.62 L866.2 139.71 L867.2 139.79 L868.2 139.88 L869.2 139.96 L870.2 140.05 L871.2 140.13 L872.2 140.22 L873.2 140.31 L874.2 140.40 L875.2 140.49 L876.2 140.58 L877.2 140.67 L878.2 140.76 L879.2 140.85 L880.2 140.94 L881.2 141.04 L882.2 141.13 L883.2 141.23 L884.2 141.32 L885.2 141.42 L886.2 141.52 L887.2 141.61 L888.2 141.71 L889.2 141.81 L890.2 141.91 L891.2 142.01 L892.2 142.12 L893.2 142.22 L894.2 142.33 L895.2 142.43 L896.2 142.54 L897.2 142.65 L898.2 142.76 L899.2 142.87 L900.2 142.98 L901.2 143.10 L902.2 143.21 L903.2 143.33 L904.2 143.45 L905.2 143.56 L906.2 143.68 L907.2 143.80 L908.2 143.92 L909.2 144.05 L910.2 144.17 L911.2 144.29 L912.2 144.42 L913.2 144.54 L914.2 144.67 L915.2 144.80 L916.2 144.92 L917.2 145.05 L918.2 145.18 L919.2 145.31 L920.2 145.44 L921.2 145.57 L922.2 145.70 L923.2 145.83 L924.2 145.96 L925.2 146.09 L926.2 146.23 L927.2 146.36 L928.2 146.50 L929.2 146.64 L930.2 146.78 L931.2 146.92 L932.2 147.06 L933.2 147.20 L934.2 147.34 L935.2 147.49 L936.2 147.63 L937.2 147.78 L938.2 147.92 L939.2 148.07 L940.2 148.21 L941.2 148.36 L942.2 148.50 L943.2 148.65 L944.2 148.80 L945.2 148.94 L946.2 149.08 L947.2 149.23 L948.2 149.37 L949.2 149.52 L950.2 149.67 L951.2 149.82 L952.2 149.98 L953.2 150.13 L954.2 150.29 L955.2 150.44 L956.2 150.60 L957.2 150.76 L958.2 150.91 L959.2 151.07 L960.2 151.23 L961.2 151.38 L962.2 151.53 L963.2 151.69 L964.2 151.84 L965.2 151.99 L966.2 152.13 L967.2 152.28 L968.2 152.42 L969.2 152.56 L970.2 152.70 L971.2 152.83 L972.2 152.96 L973.2 153.08 L974.2 153.21 L975.2 153.32 L976.2 153.44 L977.2 153.55 L978.2 153.67 L979.2 153.79 L980.2 153.90 L981.2 154.02 L982.2 154.13 L983.2 154.24 L984.2 154.36 L985.2 154.47 L986.2 154.58 L987.2 154.69 L988.2 154.79 L989.2 154.90 L990.2 155.00 L991.2 155.11 L992.2 155.20 L993.2 155.30 L994.2 155.40 L995.2 155.49 L996.2 155.58 L997.2 155.66 L998.2 155.75 L999.2 155.83 L1000.2 155.90 L1001.2 155.97 L1002.2 156.04 L1003.2 156.11 L1004.2 156.17 L1005.2 156.22 L1006.2 156.28 L1007.2 156.32 L1008.2 156.37 L1009.2 156.41 L1010.2 156.46 L1011.2 156.50 L1012.2 156.54 L1013.2 156.58 L1014.2 156.62 L1015.2 156.66 L1016.2 156.70 L1017.2 156.73 L1018.2 156.76 L1019.2 156.80 L1020.2 156.83 L1021.2 156.85 L1022.2 156.88 L1023.2 156.91 L1024.2 156.93 L1025.2 156.95 L1026.2 156.97 L1027.2 156.99 L1028.2 157.00 L1029.2 157.02 L1030.2 157.03 L1031.2 157.04 L1032.2 157.05 L1033.2 157.07 L1034.2 157.08 L1035.2 157.08 L1036.2 157.09 L1037.2 157.10 L1038.2 157.11 L1039.2 157.12 L1040.2 157.12 L1041.2 157.13 L1042.2 157.14 L1043.2 157.14 L1044.2 157.15 L1045.2 157.16 L1046.2 157.16 L1047.2 157.17 L1048.2 157.18 L1049.2 157.18 L1050.2 157.19 L1051.2 157.20 L1052.2 157.21 L1053.2 157.22 L1054.2 157.23 L1055.2 157.24 L1056.2 157.25 L1057.2 157.26 L1058.2 157.27 L1059.2 157.29 L1060.2 157.30 L1061.2 157.32 L1062.2 157.34 L1063.2 157.36 L1064.2 157.39 L1065.2 157.42 L1066.2 157.45 L1067.2 157.48 L1068.2 157.52 L1069.2 157.55 L1070.2 157.59 L1071.2 157.64 L1072.2 157.68 L1073.2 157.72 L1074.2 157.77 L1075.2 157.82 L1076.2 157.87 L1077.2 157.92 L1078.2 157.98 L1079.2 158.03 L1080.2 158.09 L1081.2 158.15 L1082.2 158.21 L1083.2 158.27 L1084.2 158.33 L1085.2 158.39 L1086.2 158.45 L1087.2 158.52 L1088.2 158.58 L1089.2 158.65 L1090.2 158.71 L1091.2 158.78 L1092.2 158.86 L1093.2 158.93 L1094.2 159.01 L1095.2 159.10 L1096.2 159.19 L1097.2 159.28 L1098.2 159.38 L1099.2 159.48 L1100.2 159.58 L1101.2 159.69 L1102.2 159.80 L1103.2 159.91 L1104.2 160.03 L1105.2 160.16 L1106.2 160.28 L1107.2 160.41 L1108.2 160.55 L1109.2 160.69 L1110.2 160.83 L1111.2 160.98 L1112.2 161.13 L1113.2 161.30 L1114.2 161.47 L1115.2 161.65 L1116.2 161.84 L1117.2 162.04 L1118.2 162.24 L1119.2 162.45 L1120.2 162.67 L1121.2 162.90 L1122.2 163.13 L1123.2 163.37 L1124.2 163.62 L1125.2 163.88 L1126.2 164.14 L1127.2 164.41 L1128.2 164.69 L1129.2 164.97 L1130.2 165.26 L1131.2 165.56 L1132.2 165.86 L1133.2 166.18 L1134.2 166.53 L1135.2 166.89 L1136.2 167.27 L1137.2 167.68 L1138.2 168.09 L1139.2 168.53 L1140.2 168.98 L1141.2 169.44 L1142.2 169.92 L1143.2 170.40 L1144.2 170.90 L1145.2 171.41 L1146.2 171.92 L1147.2 172.44 L1148.2 172.97 L1149.2 173.50 L1150.2 174.03 L1151.2 174.57 L1152.2 175.11 L1153.2 175.66 L1154.2 176.22 L1155.2 176.79 L1156.2 177.37 L1157.2 177.96 L1158.2 178.56 L1159.2 179.17 L1160.2 179.79 L1161.2 180.43 L1162.2 181.08 L1163.2 181.74 L1164.2 182.41 L1165.2 183.10 L1166.2 183.81 L1167.2 184.53 L1168.2 185.27 L1169.2 186.02 L1170.2 186.79 L1171.2 187.58 L1172.2 188.39 L1173.2 189.22 L1174.2 190.08 L1175.2 190.99 L1176.2 191.95 L1177.2 192.96 L1178.2 194.00 L1179.2 195.08 L1180.2 196.19 L1181.2 197.32 L1182.2 198.47 L1183.2 199.64 L1184.2 200.82 L1185.2 202.00 L1186.2 203.18 L1187.2 204.36 L1188.2 205.53 L1189.2 206.71 L1190.2 207.91 L1191.2 209.12 L1192.2 210.35 L1193.2 211.59 L1194.2 212.84 L1195.2 214.11 L1196.2 215.38 L1197.2 216.67 L1198.2 217.96 L1199.2 219.26 L1200.2 220.56 L1201.2 221.87 L1202.2 223.19 L1203.2 224.53 L1204.2 225.89 L1205.2 227.27 L1206.2 228.65 L1207.2 230.05 L1208.2 231.45 L1209.2 232.86 L1210.2 234.26 L1211.2 235.67 L1212.2 237.07 L1213.2 238.46 L1214.2 239.83 L1215.2 241.20 L1216.2 242.54 L1217.2 243.87 L1218.2 245.18 L1219.2 246.49 L1220.2 247.81 L1221.2 249.12 L1222.2 250.43 L1223.2 251.74 L1224.2 253.04 L1225.2 254.34 L1226.2 255.63 L1227.2 256.91 L1228.2 258.18 L1229.2 259.44 L1230.2 260.69 L1231.2 261.93 L1232.2 263.16 L1233.2 264.36 L1234.2 265.56 L1235.2 266.73 L1236.2 267.89 L1237.2 269.03 L1238.2 270.15 L1239.2 271.25 L1240.2 272.32 L1241.2 273.38 L1242.2 274.42 L1243.2 275.45 L1244.2 276.46 L1245.2 277.46 L1246.2 278.44 L1247.2 279.41 L1248.2 280.38 L1249.2 281.34 L1250.2 282.28 L1251.2 283.23 L1252.2 284.16 L1253.2 285.10 L1254.2 286.03 L1255.2 286.96 L1256.2 287.89 L1257.2 288.81 L1258.2 289.73 L1259.2 290.64 L1260.2 291.54 L1261.2 292.43 L1262.2 293.31 L1263.2 294.16 L1264.2 295.00 L1265.2 295.82 L1266.2 296.62 L1267.2 297.40 L1268.2 298.17 L1269.2 298.93 L1270.2 299.69 L1271.2 300.43 L1272.2 301.16 L1273.2 301.89 L1274.2 302.60 L1275.2 303.31 L1276.2 304.01 L1277.2 304.71 L1278.2 305.39 L1279.2 306.07 L1280.2 306.75 L1281.2 307.42 L1282.2 308.08 L1283.2 308.74 L1284.2 309.39 L1285.2 310.04 L1286.2 310.68 L1287.2 311.32 L1288.2 311.95 L1289.2 312.58 L1290.2 313.21 L1291.2 313.83 L1292.2 314.45 L1293.2 315.06 L1294.2 315.67 L1295.2 316.27 L1296.2 316.87 L1297.2 317.47 L1298.2 318.06 L1299.2 318.65 L1300.2 319.24 L1301.2 319.82 L1302.2 320.40 L1303.2 320.98 L1304.2 321.55 L1305.2 322.12 L1306.2 322.69 L1307.2 323.25 L1308.2 323.82 L1309.2 324.38 L1310.2 324.93 L1311.2 325.49 L1312.2 326.04 L1313.2 326.59 L1314.2 327.14 L1315.2 327.69 L1316.2 328.24 L1317.2 328.78 L1318.2 329.32 L1319.2 329.87 L1320.2 330.41 L1321.2 330.95 L1322.2 331.48 L1323.2 332.02 L1324.2 332.56 L1325.2 333.10 L1326.2 333.63 L1327.2 334.17 L1328.2 334.70 L1329.2 335.23 L1330.2 335.76 L1331.2 336.29 L1332.2 336.82 L1333.2 337.35 L1334.2 337.87 L1335.2 338.39 L1336.2 338.91 L1337.2 339.43 L1338.2 339.94 L1339.2 340.45 L1340.2 340.96 L1341.2 341.47 L1342.2 341.97 L1343.2 342.47 L1344.2 342.96 L1345.2 343.45 L1346.2 343.94 L1347.2 344.43 L1348.2 344.91 L1349.2 345.38 L1350.2 345.86 L1351.2 346.32 L1352.2 346.79 L1353.2 347.24 L1354.2 347.70 L1355.2 348.15 L1356.2 348.59 L1357.2 349.03 L1358.2 349.46 L1359.2 349.90 L1360.2 350.32 L1361.2 350.75 L1362.2 351.17 L1363.2 351.59 L1364.2 352.00 L1365.2 352.41 L1366.2 352.82 L1367.2 353.22 L1368.2 353.61 L1369.2 354.00 L1370.2 354.39 L1371.2 354.77 L1372.2 355.15 L1373.2 355.52 L1374.2 355.89 L1375.2 356.26 L1376.2 356.61 L1377.2 356.97 L1378.2 357.31 L1379.2 357.66 L1380.2 358.01 L1381.2 358.35 L1382.2 358.70 L1383.2 359.04 L1384.2 359.38 L1385.2 359.71 L1386.2 360.05 L1387.2 360.38 L1388.2 360.71 L1389.2 361.03 L1390.2 361.35 L1391.2 361.67 L1392.2 361.99 L1393.2 362.30 L1394.2 362.61 L1395.2 362.91 L1396.2 363.20 L1397.2 363.50 L1398.2 363.79 L1399.2 364.07 L1400.2 364.35 L1401.2 364.62 L1402.2 364.88 L1403.2 365.14 L1404.2 365.40 L1405.2 365.64 L1406.2 365.88 L1407.2 366.12 L1408.2 366.35 L1409.2 366.58 L1410.2 366.81 L1411.2 367.03 L1412.2 367.26 L1413.2 367.48 L1414.2 367.70 L1415.2 367.92 L1416.2 368.14 L1417.2 368.36 L1418.2 368.57 L1419.2 368.78 L1420.2 368.99 L1421.2 369.20 L1422.2 369.40 L1423.2 369.60 L1424.2 369.80 L1425.2 369.99 L1426.2 370.19 L1427.2 370.37 L1428.2 370.56 L1429.2 370.74 L1430.2 370.92 L1431.2 371.10 L1432.2 371.27 L1433.2 371.44 L1434.2 371.61 L1435.2 371.77 L1436.2 371.93 L1437.2 372.09 L1438.2 372.24 L1439.2 372.39 L1440.2 372.53 L1441.2 372.67 L1442.2 372.80 L1443.2 372.93 L1444.2 373.06 L1445.2 373.18 L1446.2 373.30" fill="none" stroke="#ff2020" stroke-width="1.1" stroke-dasharray="1.2 1.9"/>
<path d="M52.2 139.79 L53.2 139.40 L54.2 139.01 L55.2 138.62 L56.2 138.22 L57.2 137.83 L58.2 137.44 L59.2 137.05 L60.2 136.66 L61.2 136.27 L62.2 135.88 L63.2 135.49 L64.2 135.10 L65.2 134.71 L66.2 134.32 L67.2 133.93 L68.2 133.54 L69.2 133.15 L70.2 132.76 L71.2 132.38 L72.2 131.99 L73.2 131.60 L74.2 131.22 L75.2 130.83 L76.2 130.45 L77.2 130.06 L78.2 129.68 L79.2 129.29 L80.2 128.91 L81.2 128.53 L82.2 128.15 L83.2 127.76 L84.2 127.38 L85.2 127.00 L86.2 126.62 L87.2 126.24 L88.2 125.86 L89.2 125.48 L90.2 125.11 L91.2 124.73 L92.2 124.35 L93.2 123.98 L94.2 123.60 L95.2 123.23 L96.2 122.85 L97.2 122.48 L98.2 122.11 L99.2 121.73 L100.2 121.36 L101.2 120.99 L102.2 120.62 L103.2 120.25 L104.2 119.89 L105.2 119.52 L106.2 119.15 L107.2 118.79 L108.2 118.42 L109.2 118.06 L110.2 117.70 L111.2 117.34 L112.2 116.98 L113.2 116.62 L114.2 116.26 L115.2 115.90 L116.2 115.54 L117.2 115.19 L118.2 114.83 L119.2 114.48 L120.2 114.13 L121.2 113.78 L122.2 113.43 L123.2 113.08 L124.2 112.73 L125.2 112.39 L126.2 112.04 L127.2 111.70 L128.2 111.36 L129.2 111.02 L130.2 110.68 L131.2 110.34 L132.2 110.01 L133.2 109.67 L134.2 109.34 L135.2 109.01 L136.2 108.68 L137.2 108.35 L138.2 108.02 L139.2 107.70 L140.2 107.37 L141.2 107.05 L142.2 106.73 L143.2 106.41 L144.2 106.10 L145.2 105.78 L146.2 105.47 L147.2 105.16 L148.2 104.85 L149.2 104.54 L150.2 104.23 L151.2 103.93 L152.2 103.63 L153.2 103.33 L154.2 103.03 L155.2 102.74 L156.2 102.44 L157.2 102.15 L158.2 101.86 L159.2 101.58 L160.2 101.29 L161.2 101.01 L162.2 100.73 L163.2 100.45 L164.2 100.18 L165.2 99.90 L166.2 99.63 L167.2 99.36 L168.2 99.10 L169.2 98.83 L170.2 98.57 L171.2 98.31 L172.2 98.06 L173.2 97.80 L174.2 97.55 L175.2 97.30 L176.2 97.06 L177.2 96.81 L178.2 96.57 L179.2 96.33 L180.2 96.09 L181.2 95.86 L182.2 95.63 L183.2 95.40 L184.2 95.18 L185.2 94.95 L186.2 94.73 L187.2 94.51 L188.2 94.30 L189.2 94.08 L190.2 93.87 L191.2 93.67 L192.2 93.46 L193.2 93.26 L194.2 93.06 L195.2 92.86 L196.2 92.67 L197.2 92.48 L198.2 92.29 L199.2 92.10 L200.2 91.92 L201.2 91.74 L202.2 91.56 L203.2 91.38 L204.2 91.21 L205.2 91.04 L206.2 90.87 L207.2 90.71 L208.2 90.55 L209.2 90.38 L210.2 90.23 L211.2 90.07 L212.2 89.92 L213.2 89.77 L214.2 89.62 L215.2 89.48 L216.2 89.33 L217.2 89.19 L218.2 89.06 L219.2 88.92 L220.2 88.79 L221.2 88.66 L222.2 88.53 L223.2 88.40 L224.2 88.28 L225.2 88.16 L226.2 88.04 L227.2 87.92 L228.2 87.80 L229.2 87.69 L230.2 87.58 L231.2 87.47 L232.2 87.37 L233.2 87.26 L234.2 87.16 L235.2 87.06 L236.2 86.96 L237.2 86.86 L238.2 86.77 L239.2 86.68 L240.2 86.59 L241.2 86.50 L242.2 86.41 L243.2 86.32 L244.2 86.24 L245.2 86.16 L246.2 86.08 L247.2 86.00 L248.2 85.92 L249.2 85.85 L250.2 85.77 L251.2 85.70 L252.2 85.63 L253.2 85.56 L254.2 85.50 L255.2 85.43 L256.2 85.36 L257.2 85.30 L258.2 85.24 L259.2 85.18 L260.2 85.12 L261.2 85.06 L262.2 85.01 L263.2 84.95 L264.2 84.90 L265.2 84.85 L266.2 84.79 L267.2 84.74 L268.2 84.69 L269.2 84.65 L270.2 84.60 L271.2 84.55 L272.2 84.51 L273.2 84.47 L274.2 84.42 L275.2 84.38 L276.2 84.34 L277.2 84.30 L278.2 84.26 L279.2 84.22 L280.2 84.19 L281.2 84.15 L282.2 84.12 L283.2 84.08 L284.2 84.05 L285.2 84.01 L286.2 83.98 L287.2 83.95 L288.2 83.92 L289.2 83.89 L290.2 83.86 L291.2 83.83 L292.2 83.81 L293.2 83.78 L294.2 83.75 L295.2 83.73 L296.2 83.70 L297.2 83.68 L298.2 83.65 L299.2 83.63 L300.2 83.61 L301.2 83.59 L302.2 83.56 L303.2 83.54 L304.2 83.52 L305.2 83.50 L306.2 83.48 L307.2 83.46 L308.2 83.45 L309.2 83.43 L310.2 83.41 L311.2 83.39 L312.2 83.38 L313.2 83.36 L314.2 83.34 L315.2 83.33 L316.2 83.31 L317.2 83.30 L318.2 83.28 L319.2 83.27 L320.2 83.26 L321.2 83.24 L322.2 83.23 L323.2 83.22 L324.2 83.20 L325.2 83.19 L326.2 83.18 L327.2 83.17 L328.2 83.16 L329.2 83.15 L330.2 83.14 L331.2 83.13 L332.2 83.12 L333.2 83.11 L334.2 83.10 L335.2 83.09 L336.2 83.08 L337.2 83.07 L338.2 83.06 L339.2 83.05 L340.2 83.04 L341.2 83.04 L342.2 83.03 L343.2 83.02 L344.2 83.01 L345.2 83.01 L346.2 83.00 L347.2 82.99 L348.2 82.99 L349.2 82.98 L350.2 82.97 L351.2 82.97 L352.2 82.96 L353.2 82.96 L354.2 82.95 L355.2 82.94 L356.2 82.94 L357.2 82.93 L358.2 82.93 L359.2 82.92 L360.2 82.92 L361.2 82.91 L362.2 82.91 L363.2 82.91 L364.2 82.90 L365.2 82.90 L366.2 82.89 L367.2 82.89 L368.2 82.88 L369.2 82.88 L370.2 82.88 L371.2 82.87 L372.2 82.87 L373.2 82.87 L374.2 82.86 L375.2 82.86 L376.2 82.86 L377.2 82.85 L378.2 82.85 L379.2 82.85 L380.2 82.84 L381.2 82.84 L382.2 82.84 L383.2 82.84 L384.2 82.83 L385.2 82.83 L386.2 82.83 L387.2 82.83 L388.2 82.82 L389.2 82.82 L390.2 82.82 L391.2 82.82 L392.2 82.82 L393.2 82.81 L394.2 82.81 L395.2 82.81 L396.2 82.81 L397.2 82.81 L398.2 82.80 L399.2 82.80 L400.2 82.80 L401.2 82.80 L402.2 82.80 L403.2 82.80 L404.2 82.79 L405.2 82.79 L406.2 82.79 L407.2 82.79 L408.2 82.79 L409.2 82.79 L410.2 82.79 L411.2 82.78 L412.2 82.78 L413.2 82.78 L414.2 82.78 L415.2 82.78 L416.2 82.78 L417.2 82.78 L418.2 82.78 L419.2 82.77 L420.2 82.77 L421.2 82.77 L422.2 82.77 L423.2 82.77 L424.2 82.77 L425.2 82.77 L426.2 82.77 L427.2 82.77 L428.2 82.77 L429.2 82.77 L430.2 82.77 L431.2 82.76 L432.2 82.76 L433.2 82.76 L434.2 82.76 L435.2 82.76 L436.2 82.76 L437.2 82.76 L438.2 82.76 L439.2 82.76 L440.2 82.76 L441.2 82.76 L442.2 82.76 L443.2 82.76 L444.2 82.76 L445.2 82.76 L446.2 82.76 L447.2 82.75 L448.2 82.75 L449.2 82.75 L450.2 82.75 L451.2 82.75 L452.2 82.75 L453.2 82.75 L454.2 82.75 L455.2 82.75 L456.2 82.75 L457.2 82.75 L458.2 82.75 L459.2 82.75 L460.2 82.75 L461.2 82.75 L462.2 82.75 L463.2 82.75 L464.2 82.75 L465.2 82.75 L466.2 82.75 L467.2 82.75 L468.2 82.75 L469.2 82.75 L470.2 82.75 L471.2 82.75 L472.2 82.75 L473.2 82.75 L474.2 82.75 L475.2 82.75 L476.2 82.74 L477.2 82.74 L478.2 82.74 L479.2 82.74 L480.2 82.74 L481.2 82.74 L482.2 82.74 L483.2 82.74 L484.2 82.74 L485.2 82.74 L486.2 82.74 L487.2 82.74 L488.2 82.74 L489.2 82.74 L490.2 82.74 L491.2 82.74 L492.2 82.74 L493.2 82.74 L494.2 82.74 L495.2 82.74 L496.2 82.74 L497.2 82.74 L498.2 82.74 L499.2 82.74 L500.2 82.74 L501.2 82.74 L502.2 82.74 L503.2 82.74 L504.2 82.74 L505.2 82.74 L506.2 82.74 L507.2 82.74 L508.2 82.74 L509.2 82.74 L510.2 82.74 L511.2 82.74 L512.2 82.74 L513.2 82.74 L514.2 82.74 L515.2 82.74 L516.2 82.74 L517.2 82.74 L518.2 82.74 L519.2 82.74 L520.2 82.74 L521.2 82.74 L522.2 82.74 L523.2 82.74 L524.2 82.74 L525.2 82.74 L526.2 82.74 L527.2 82.74 L528.2 82.74 L529.2 82.74 L530.2 82.74 L531.2 82.74 L532.2 82.74 L533.2 82.74 L534.2 82.74 L535.2 82.74 L536.2 82.74 L537.2 82.74 L538.2 82.74 L539.2 82.74 L540.2 82.74 L541.2 82.74 L542.2 82.74 L543.2 82.74 L544.2 82.74 L545.2 82.74 L546.2 82.74 L547.2 82.74 L548.2 82.74 L549.2 82.74 L550.2 82.74 L551.2 82.74 L552.2 82.74 L553.2 82.74 L554.2 82.74 L555.2 82.74 L556.2 82.74 L557.2 82.74 L558.2 82.74 L559.2 82.74 L560.2 82.74 L561.2 82.74 L562.2 82.74 L563.2 82.74 L564.2 82.74 L565.2 82.74 L566.2 82.74 L567.2 82.74 L568.2 82.74 L569.2 82.74 L570.2 82.74 L571.2 82.74 L572.2 82.74 L573.2 82.74 L574.2 82.74 L575.2 82.74 L576.2 82.74 L577.2 82.74 L578.2 82.74 L579.2 82.74 L580.2 82.74 L581.2 82.74 L582.2 82.74 L583.2 82.74 L584.2 82.74 L585.2 82.74 L586.2 82.74 L587.2 82.74 L588.2 82.74 L589.2 82.74 L590.2 82.74 L591.2 82.74 L592.2 82.74 L593.2 82.74 L594.2 82.74 L595.2 82.74 L596.2 82.74 L597.2 82.74 L598.2 82.74 L599.2 82.74 L600.2 82.74 L601.2 82.74 L602.2 82.74 L603.2 82.74 L604.2 82.74 L605.2 82.74 L606.2 82.74 L607.2 82.74 L608.2 82.74 L609.2 82.74 L610.2 82.74 L611.2 82.74 L612.2 82.74 L613.2 82.74 L614.2 82.74 L615.2 82.74 L616.2 82.74 L617.2 82.74 L618.2 82.74 L619.2 82.74 L620.2 82.74 L621.2 82.74 L622.2 82.74 L623.2 82.74 L624.2 82.74 L625.2 82.74 L626.2 82.74 L627.2 82.74 L628.2 82.74 L629.2 82.74 L630.2 82.74 L631.2 82.74 L632.2 82.74 L633.2 82.74 L634.2 82.74 L635.2 82.74 L636.2 82.74 L637.2 82.74 L638.2 82.74 L639.2 82.74 L640.2 82.74 L641.2 82.74 L642.2 82.74 L643.2 82.74 L644.2 82.74 L645.2 82.74 L646.2 82.74 L647.2 82.74 L648.2 82.74 L649.2 82.74 L650.2 82.74 L651.2 82.74 L652.2 82.74 L653.2 82.74 L654.2 82.74 L655.2 82.74 L656.2 82.74 L657.2 82.74 L658.2 82.74 L659.2 82.74 L660.2 82.74 L661.2 82.74 L662.2 82.74 L663.2 82.74 L664.2 82.74 L665.2 82.74 L666.2 82.74 L667.2 82.74 L668.2 82.74 L669.2 82.74 L670.2 82.74 L671.2 82.74 L672.2 82.74 L673.2 82.74 L674.2 82.74 L675.2 82.74 L676.2 82.74 L677.2 82.74 L678.2 82.74 L679.2 82.74 L680.2 82.74 L681.2 82.74 L682.2 82.74 L683.2 82.74 L684.2 82.74 L685.2 82.74 L686.2 82.74 L687.2 82.74 L688.2 82.74 L689.2 82.74 L690.2 82.74 L691.2 82.74 L692.2 82.74 L693.2 82.74 L694.2 82.74 L695.2 82.74 L696.2 82.74 L697.2 82.74 L698.2 82.74 L699.2 82.74 L700.2 82.74 L701.2 82.74 L702.2 82.74 L703.2 82.74 L704.2 82.74 L705.2 82.74 L706.2 82.74 L707.2 82.74 L708.2 82.74 L709.2 82.74 L710.2 82.74 L711.2 82.74 L712.2 82.74 L713.2 82.74 L714.2 82.74 L715.2 82.74 L716.2 82.74 L717.2 82.74 L718.2 82.74 L719.2 82.74 L720.2 82.74 L721.2 82.74 L722.2 82.74 L723.2 82.74 L724.2 82.74 L725.2 82.74 L726.2 82.74 L727.2 82.74 L728.2 82.74 L729.2 82.74 L730.2 82.74 L731.2 82.74 L732.2 82.74 L733.2 82.74 L734.2 82.74 L735.2 82.74 L736.2 82.74 L737.2 82.74 L738.2 82.74 L739.2 82.74 L740.2 82.74 L741.2 82.74 L742.2 82.74 L743.2 82.74 L744.2 82.74 L745.2 82.74 L746.2 82.74 L747.2 82.74 L748.2 82.74 L749.2 82.74 L750.2 82.74 L751.2 82.74 L752.2 82.74 L753.2 82.74 L754.2 82.74 L755.2 82.74 L756.2 82.74 L757.2 82.74 L758.2 82.74 L759.2 82.74 L760.2 82.74 L761.2 82.74 L762.2 82.74 L763.2 82.74 L764.2 82.74 L765.2 82.74 L766.2 82.74 L767.2 82.74 L768.2 82.74 L769.2 82.74 L770.2 82.74 L771.2 82.74 L772.2 82.74 L773.2 82.74 L774.2 82.74 L775.2 82.74 L776.2 82.74 L777.2 82.74 L778.2 82.74 L779.2 82.74 L780.2 82.74 L781.2 82.74 L782.2 82.74 L783.2 82.74 L784.2 82.74 L785.2 82.74 L786.2 82.74 L787.2 82.74 L788.2 82.74 L789.2 82.74 L790.2 82.74 L791.2 82.74 L792.2 82.74 L793.2 82.74 L794.2 82.74 L795.2 82.74 L796.2 82.74 L797.2 82.74 L798.2 82.74 L799.2 82.74 L800.2 82.74 L801.2 82.74 L802.2 82.74 L803.2 82.74 L804.2 82.75 L805.2 82.75 L806.2 82.76 L807.2 82.76 L808.2 82.77 L809.2 82.78 L810.2 82.79 L811.2 82.80 L812.2 82.81 L813.2 82.82 L814.2 82.83 L815.2 82.85 L816.2 82.86 L817.2 82.87 L818.2 82.89 L819.2 82.90 L820.2 82.92 L821.2 82.94 L822.2 82.95 L823.2 82.97 L824.2 82.99 L825.2 83.01 L826.2 83.03 L827.2 83.05 L828.2 83.07 L829.2 83.09 L830.2 83.11 L831.2 83.13 L832.2 83.15 L833.2 83.17 L834.2 83.19 L835.2 83.21 L836.2 83.23 L837.2 83.25 L838.2 83.27 L839.2 83.29 L840.2 83.32 L841.2 83.34 L842.2 83.36 L843.2 83.38 L844.2 83.40 L845.2 83.42 L846.2 83.44 L847.2 83.46 L848.2 83.48 L849.2 83.50 L850.2 83.52 L851.2 83.54 L852.2 83.56 L853.2 83.58 L854.2 83.60 L855.2 83.62 L856.2 83.64 L857.2 83.65 L858.2 83.67 L859.2 83.69 L860.2 83.70 L861.2 83.72 L862.2 83.73 L863.2 83.75 L864.2 83.76 L865.2 83.77 L866.2 83.79 L867.2 83.80 L868.2 83.81 L869.2 83.83 L870.2 83.84 L871.2 83.85 L872.2 83.86 L873.2 83.87 L874.2 83.89 L875.2 83.90 L876.2 83.91 L877.2 83.93 L878.2 83.94 L879.2 83.95 L880.2 83.97 L881.2 83.98 L882.2 83.99 L883.2 84.01 L884.2 84.03 L885.2 84.04 L886.2 84.06 L887.2 84.08 L888.2 84.10 L889.2 84.12 L890.2 84.14 L891.2 84.16 L892.2 84.18 L893.2 84.20 L894.2 84.23 L895.2 84.26 L896.2 84.29 L897.2 84.33 L898.2 84.37 L899.2 84.41 L900.2 84.46 L901.2 84.51 L902.2 84.56 L903.2 84.61 L904.2 84.66 L905.2 84.72 L906.2 84.77 L907.2 84.83 L908.2 84.89 L909.2 84.95 L910.2 85.01 L911.2 85.08 L912.2 85.14 L913.2 85.20 L914.2 85.27 L915.2 85.33 L916.2 85.39 L917.2 85.45 L918.2 85.52 L919.2 85.58 L920.2 85.64 L921.2 85.70 L922.2 85.75 L923.2 85.81 L924.2 85.87 L925.2 85.92 L926.2 85.97 L927.2 86.03 L928.2 86.08 L929.2 86.13 L930.2 86.18 L931.2 86.24 L932.2 86.29 L933.2 86.34 L934.2 86.40 L935.2 86.45 L936.2 86.51 L937.2 86.56 L938.2 86.62 L939.2 86.68 L940.2 86.74 L941.2 86.80 L942.2 86.86 L943.2 86.93 L944.2 87.00 L945.2 87.07 L946.2 87.14 L947.2 87.22 L948.2 87.29 L949.2 87.38 L950.2 87.46 L951.2 87.56 L952.2 87.65 L953.2 87.75 L954.2 87.85 L955.2 87.96 L956.2 88.06 L957.2 88.17 L958.2 88.28 L959.2 88.40 L960.2 88.51 L961.2 88.63 L962.2 88.75 L963.2 88.87 L964.2 88.99 L965.2 89.11 L966.2 89.24 L967.2 89.36 L968.2 89.48 L969.2 89.60 L970.2 89.73 L971.2 89.85 L972.2 89.97 L973.2 90.09 L974.2 90.21 L975.2 90.32 L976.2 90.44 L977.2 90.56 L978.2 90.68 L979.2 90.79 L980.2 90.91 L981.2 91.03 L982.2 91.15 L983.2 91.27 L984.2 91.39 L985.2 91.51 L986.2 91.64 L987.2 91.76 L988.2 91.88 L989.2 92.00 L990.2 92.13 L991.2 92.25 L992.2 92.37 L993.2 92.50 L994.2 92.62 L995.2 92.75 L996.2 92.87 L997.2 93.00 L998.2 93.12 L999.2 93.25 L1000.2 93.38 L1001.2 93.50 L1002.2 93.63 L1003.2 93.76 L1004.2 93.88 L1005.2 94.01 L1006.2 94.14 L1007.2 94.26 L1008.2 94.39 L1009.2 94.52 L1010.2 94.65 L1011.2 94.78 L1012.2 94.91 L1013.2 95.04 L1014.2 95.17 L1015.2 95.31 L1016.2 95.44 L1017.2 95.57 L1018.2 95.70 L1019.2 95.84 L1020.2 95.97 L1021.2 96.10 L1022.2 96.24 L1023.2 96.37 L1024.2 96.50 L1025.2 96.63 L1026.2 96.76 L1027.2 96.90 L1028.2 97.03 L1029.2 97.16 L1030.2 97.29 L1031.2 97.42 L1032.2 97.56 L1033.2 97.69 L1034.2 97.82 L1035.2 97.96 L1036.2 98.09 L1037.2 98.22 L1038.2 98.35 L1039.2 98.48 L1040.2 98.61 L1041.2 98.74 L1042.2 98.86 L1043.2 98.99 L1044.2 99.11 L1045.2 99.22 L1046.2 99.34 L1047.2 99.46 L1048.2 99.57 L1049.2 99.69 L1050.2 99.80 L1051.2 99.91 L1052.2 100.02 L1053.2 100.13 L1054.2 100.23 L1055.2 100.34 L1056.2 100.44 L1057.2 100.54 L1058.2 100.64 L1059.2 100.73 L1060.2 100.82 L1061.2 100.91 L1062.2 101.00 L1063.2 101.09 L1064.2 101.19 L1065.2 101.28 L1066.2 101.38 L1067.2 101.47 L1068.2 101.57 L1069.2 101.66 L1070.2 101.75 L1071.2 101.84 L1072.2 101.92 L1073.2 102.00 L1074.2 102.08 L1075.2 102.15 L1076.2 102.22 L1077.2 102.28 L1078.2 102.34 L1079.2 102.39 L1080.2 102.43 L1081.2 102.46 L1082.2 102.49 L1083.2 102.50 L1084.2 102.52 L1085.2 102.53 L1086.2 102.54 L1087.2 102.55 L1088.2 102.56 L1089.2 102.57 L1090.2 102.58 L1091.2 102.59 L1092.2 102.60 L1093.2 102.61 L1094.2 102.62 L1095.2 102.62 L1096.2 102.63 L1097.2 102.64 L1098.2 102.64 L1099.2 102.65 L1100.2 102.65 L1101.2 102.66 L1102.2 102.66 L1103.2 102.67 L1104.2 102.67 L1105.2 102.68 L1106.2 102.68 L1107.2 102.69 L1108.2 102.69 L1109.2 102.70 L1110.2 102.70 L1111.2 102.71 L1112.2 102.71 L1113.2 102.71 L1114.2 102.72 L1115.2 102.72 L1116.2 102.72 L1117.2 102.73 L1118.2 102.73 L1119.2 102.73 L1120.2 102.74 L1121.2 102.74 L1122.2 102.74 L1123.2 102.74 L1124.2 102.74 L1125.2 102.75 L1126.2 102.75 L1127.2 102.75 L1128.2 102.75 L1129.2 102.75 L1130.2 102.76 L1131.2 102.76 L1132.2 102.76 L1133.2 102.76 L1134.2 102.76 L1135.2 102.76 L1136.2 102.76 L1137.2 102.77 L1138.2 102.77 L1139.2 102.77 L1140.2 102.77 L1141.2 102.77 L1142.2 102.77 L1143.2 102.77 L1144.2 102.78 L1145.2 102.78 L1146.2 102.78 L1147.2 102.78 L1148.2 102.78 L1149.2 102.78 L1150.2 102.78 L1151.2 102.79 L1152.2 102.79 L1153.2 102.79 L1154.2 102.79 L1155.2 102.79 L1156.2 102.80 L1157.2 102.80 L1158.2 102.80 L1159.2 102.80 L1160.2 102.81 L1161.2 102.81 L1162.2 102.81 L1163.2 102.82 L1164.2 102.82 L1165.2 102.82 L1166.2 102.83 L1167.2 102.83 L1168.2 102.83 L1169.2 102.84 L1170.2 102.84 L1171.2 102.85 L1172.2 102.85 L1173.2 102.86 L1174.2 102.86 L1175.2 102.87 L1176.2 102.87 L1177.2 102.88 L1178.2 102.89 L1179.2 102.89 L1180.2 102.90 L1181.2 102.92 L1182.2 102.96 L1183.2 103.01 L1184.2 103.08 L1185.2 103.15 L1186.2 103.23 L1187.2 103.33 L1188.2 103.42 L1189.2 103.52 L1190.2 103.62 L1191.2 103.73 L1192.2 103.86 L1193.2 104.00 L1194.2 104.15 L1195.2 104.32 L1196.2 104.50 L1197.2 104.70 L1198.2 104.90 L1199.2 105.12 L1200.2 105.34 L1201.2 105.58 L1202.2 105.83 L1203.2 106.10 L1204.2 106.39 L1205.2 106.71 L1206.2 107.05 L1207.2 107.41 L1208.2 107.78 L1209.2 108.18 L1210.2 108.59 L1211.2 109.02 L1212.2 109.46 L1213.2 109.91 L1214.2 110.38 L1215.2 110.86 L1216.2 111.35 L1217.2 111.85 L1218.2 112.36 L1219.2 112.88 L1220.2 113.41 L1221.2 113.95 L1222.2 114.52 L1223.2 115.12 L1224.2 115.74 L1225.2 116.39 L1226.2 117.05 L1227.2 117.74 L1228.2 118.45 L1229.2 119.17 L1230.2 119.92 L1231.2 120.68 L1232.2 121.45 L1233.2 122.24 L1234.2 123.05 L1235.2 123.86 L1236.2 124.68 L1237.2 125.52 L1238.2 126.36 L1239.2 127.21 L1240.2 128.07 L1241.2 128.93 L1242.2 129.80 L1243.2 130.67 L1244.2 131.54 L1245.2 132.41 L1246.2 133.30 L1247.2 134.24 L1248.2 135.21 L1249.2 136.21 L1250.2 137.22 L1251.2 138.24 L1252.2 139.25 L1253.2 140.25 L1254.2 141.22 L1255.2 142.16 L1256.2 143.09 L1257.2 144.01 L1258.2 144.92 L1259.2 145.83 L1260.2 146.73 L1261.2 147.63 L1262.2 148.52 L1263.2 149.43 L1264.2 150.33 L1265.2 151.25 L1266.2 152.17 L1267.2 153.10 L1268.2 154.02 L1269.2 154.95 L1270.2 155.88 L1271.2 156.81 L1272.2 157.75 L1273.2 158.68 L1274.2 159.62 L1275.2 160.56 L1276.2 161.50 L1277.2 162.44 L1278.2 163.39 L1279.2 164.33 L1280.2 165.28 L1281.2 166.23 L1282.2 167.18 L1283.2 168.14 L1284.2 169.10 L1285.2 170.06 L1286.2 171.02 L1287.2 171.98 L1288.2 172.95 L1289.2 173.91 L1290.2 174.88 L1291.2 175.84 L1292.2 176.81 L1293.2 177.78 L1294.2 178.75 L1295.2 179.72 L1296.2 180.69 L1297.2 181.66 L1298.2 182.64 L1299.2 183.62 L1300.2 184.60 L1301.2 185.58 L1302.2 186.56 L1303.2 187.55 L1304.2 188.54 L1305.2 189.54 L1306.2 190.53 L1307.2 191.53 L1308.2 192.54 L1309.2 193.54 L1310.2 194.55 L1311.2 195.57 L1312.2 196.59 L1313.2 197.61 L1314.2 198.64 L1315.2 199.67 L1316.2 200.71 L1317.2 201.75 L1318.2 202.79 L1319.2 203.84 L1320.2 204.90 L1321.2 205.95 L1322.2 207.02 L1323.2 208.08 L1324.2 209.15 L1325.2 210.22 L1326.2 211.29 L1327.2 212.37 L1328.2 213.45 L1329.2 214.54 L1330.2 215.63 L1331.2 216.72 L1332.2 217.81 L1333.2 218.91 L1334.2 220.01 L1335.2 221.11 L1336.2 222.21 L1337.2 223.32 L1338.2 224.43 L1339.2 225.54 L1340.2 226.65 L1341.2 227.77 L1342.2 228.89 L1343.2 230.00 L1344.2 231.13 L1345.2 232.25 L1346.2 233.38 L1347.2 234.50 L1348.2 235.63 L1349.2 236.76 L1350.2 237.89 L1351.2 239.03 L1352.2 240.16 L1353.2 241.30 L1354.2 242.43 L1355.2 243.57 L1356.2 244.71 L1357.2 245.87 L1358.2 247.02 L1359.2 248.19 L1360.2 249.35 L1361.2 250.53 L1362.2 251.70 L1363.2 252.88 L1364.2 254.06 L1365.2 255.25 L1366.2 256.43 L1367.2 257.62 L1368.2 258.80 L1369.2 259.99 L1370.2 261.17 L1371.2 262.36 L1372.2 263.54 L1373.2 264.72 L1374.2 265.89 L1375.2 267.06 L1376.2 268.22 L1377.2 269.38 L1378.2 270.54 L1379.2 271.69 L1380.2 272.84 L1381.2 273.99 L1382.2 275.13 L1383.2 276.27 L1384.2 277.41 L1385.2 278.55 L1386.2 279.69 L1387.2 280.82 L1388.2 281.95 L1389.2 283.09 L1390.2 284.22 L1391.2 285.35 L1392.2 286.48 L1393.2 287.61 L1394.2 288.75 L1395.2 289.88 L1396.2 291.01 L1397.2 292.14 L1398.2 293.28 L1399.2 294.41 L1400.2 295.55 L1401.2 296.69 L1402.2 297.83 L1403.2 298.98 L1404.2 300.12 L1405.2 301.27 L1406.2 302.42 L1407.2 303.58 L1408.2 304.73 L1409.2 305.89 L1410.2 307.05 L1411.2 308.20 L1412.2 309.36 L1413.2 310.52 L1414.2 311.68 L1415.2 312.85 L1416.2 314.01 L1417.2 315.17 L1418.2 316.33 L1419.2 317.50 L1420.2 318.67 L1421.2 319.83 L1422.2 321.00 L1423.2 322.17 L1424.2 323.34 L1425.2 324.51 L1426.2 325.68 L1427.2 326.85 L1428.2 328.02 L1429.2 329.20 L1430.2 330.37 L1431.2 331.55 L1432.2 332.72 L1433.2 333.90 L1434.2 335.08 L1435.2 336.26 L1436.2 337.44 L1437.2 338.62 L1438.2 339.80 L1439.2 340.99 L1440.2 342.17 L1441.2 343.36 L1442.2 344.54 L1443.2 345.73 L1444.2 346.92 L1445.2 348.11 L1446.2 349.30" fill="none" stroke="#ff3535" stroke-width="1.2"/>
<rect x="725.5" y="31.5" width="45" height="17" fill="#fff"/>
<rect x="726" y="31.5" width="44.3" height="15.8" fill="none" stroke="#000" stroke-width="1.2" stroke-dasharray="2.6 3.1"/>
<text class="b" x="727.7" y="43" font-size="12.8" fill="#ff1a1a" textLength="40.6" lengthAdjust="spacingAndGlyphs">V(out1)</text>
<path d="M267.6 515 L267.6 562" fill="none" stroke="#4c4cff" stroke-width="1.3" stroke-linejoin="miter"/>
<path d="M267.6 596 L267.6 689" fill="none" stroke="#4c4cff" stroke-width="1.3" stroke-linejoin="miter"/>
<path d="M267.6 723 L267.6 779" fill="none" stroke="#4c4cff" stroke-width="1.3" stroke-linejoin="miter"/>
<path d="M267.6 643 L216 643 L216 677" fill="none" stroke="#4c4cff" stroke-width="1.3" stroke-linejoin="miter"/>
<path d="M206.5 677 L225.5 677 L216 686.5 Z" fill="none" stroke="#4c4cff" stroke-width="1.25"/>
<circle cx="267.6" cy="579" r="17" fill="none" stroke="#3535a0" stroke-width="1.05"/>
<path d="M262.6 569.5 H272.6 M267.6 564.5 V574.5 M262.6 589.5 H272.6" stroke="#3535a0" stroke-width="1.05"/>
<circle cx="267.6" cy="706" r="17" fill="none" stroke="#3535a0" stroke-width="1.05"/>
<path d="M262.6 696.5 H272.6 M267.6 691.5 V701.5 M262.6 716.5 H272.6" stroke="#3535a0" stroke-width="1.05"/>
<rect x="265.3" y="640.7" width="4.6" height="4.6" fill="#0a0aff"/>
<text class="b" x="0" y="0" font-size="11.8" fill="#111" stroke="#111" stroke-width="0.25" textLength="19" lengthAdjust="spacingAndGlyphs" transform="translate(272 515) rotate(-90)">Vcc</text>
<text class="b" x="0" y="0" font-size="11.8" fill="#111" stroke="#111" stroke-width="0.25" textLength="17" lengthAdjust="spacingAndGlyphs" transform="translate(272 796) rotate(-90)">Vss</text>
<text class="b" x="280" y="563" font-size="11.8" fill="#111" stroke="#111" stroke-width="0.25" textLength="14" lengthAdjust="spacingAndGlyphs">V1</text>
<text class="b" x="280" y="605" font-size="11.8" fill="#111" stroke="#111" stroke-width="0.25" textLength="15" lengthAdjust="spacingAndGlyphs">6V</text>
<text class="b" x="280" y="689" font-size="11.8" fill="#111" stroke="#111" stroke-width="0.25" textLength="14" lengthAdjust="spacingAndGlyphs">V3</text>
<text class="b" x="280" y="732" font-size="11.8" fill="#111" stroke="#111" stroke-width="0.25" textLength="15" lengthAdjust="spacingAndGlyphs">6V</text>
<path d="M360.6 680 L360.6 651.1 L434 651.1" fill="none" stroke="#4c4cff" stroke-width="1.3" stroke-linejoin="miter"/>
<path d="M360.6 714 L360.6 744.4" fill="none" stroke="#4c4cff" stroke-width="1.3" stroke-linejoin="miter"/>
<path d="M351.1 744.4 L370.1 744.4 L360.6 753.9 Z" fill="none" stroke="#4c4cff" stroke-width="1.25"/>
<circle cx="360.6" cy="697" r="17" fill="none" stroke="#3535a0" stroke-width="1.05"/>
<path d="M355.6 687.5 H365.6 M360.6 682.5 V692.5 M355.6 707.5 H365.6" stroke="#3535a0" stroke-width="1.05"/>
<path d="M434.2 642.6 V659.6 M438.2 642.6 V659.6" stroke="#3535a0" stroke-width="1.3"/>
<path d="M438.3 651.1 L623.5 651.1" fill="none" stroke="#4c4cff" stroke-width="1.3" stroke-linejoin="miter"/>
<text class="b" x="355.8" y="648.7" font-size="11.8" fill="#111" stroke="#111" stroke-width="0.25" textLength="24.6" lengthAdjust="spacingAndGlyphs">Sig1</text>
<text class="b" x="372.5" y="681.7" font-size="11.8" fill="#111" stroke="#111" stroke-width="0.25" textLength="14" lengthAdjust="spacingAndGlyphs">V2</text>
<text class="b" x="372.5" y="739" font-size="11.8" fill="#111" stroke="#111" stroke-width="0.25" textLength="26.3" lengthAdjust="spacingAndGlyphs">AC 1</text>
<text class="b" x="300" y="766.5" font-size="11.8" fill="#111" stroke="#111" stroke-width="0.25" textLength="83.8" lengthAdjust="spacingAndGlyphs">SINE(0 1.8 1k)</text>
<text class="b" x="318.7" y="795.8" font-size="11.8" fill="#1010e0" stroke="#1010e0" stroke-width="0.25" textLength="49" lengthAdjust="spacingAndGlyphs">.tran 5m</text>
<text class="b" x="318.7" y="812.6" font-size="11.8" fill="#111" stroke="#111" stroke-width="0.25" textLength="132" lengthAdjust="spacingAndGlyphs">.ac dec 100 1 100000k</text>
<text class="b" x="428.8" y="640.3" font-size="11.8" fill="#111" stroke="#111" stroke-width="0.25" textLength="14.2" lengthAdjust="spacingAndGlyphs">C1</text>
<text class="b" x="424" y="671.4" font-size="11.8" fill="#111" stroke="#111" stroke-width="0.25" textLength="25" lengthAdjust="spacingAndGlyphs">1.5µ</text>
<path d="M529.6 651.1 L529.6 680.1" fill="none" stroke="#4c4cff" stroke-width="1.3" stroke-linejoin="miter"/>
<path d="M529.6 715.1 L529.6 761" fill="none" stroke="#4c4cff" stroke-width="1.3" stroke-linejoin="miter"/>
<path d="M520.1 761 L539.1 761 L529.6 770.5 Z" fill="none" stroke="#4c4cff" stroke-width="1.25"/>
<path d="M529.6 668.4 L479 668.4 L479 680.1" fill="none" stroke="#4c4cff" stroke-width="1.3" stroke-linejoin="miter"/>
<path d="M479 715.1 L479 735.6 L529.6 735.6" fill="none" stroke="#4c4cff" stroke-width="1.3" stroke-linejoin="miter"/>
<path d="M529.6 680.1 L538.1 684.5 L521.1 693.2 L538.1 702.0 L521.1 710.7 L529.6 715.1" fill="none" stroke="#3535a0" stroke-width="1.05"/>
<path d="M479.0 680.1 L487.5 684.5 L470.5 693.2 L487.5 702.0 L470.5 710.7 L479.0 715.1" fill="none" stroke="#3535a0" stroke-width="1.05"/>
<rect x="527.3000000000001" y="648.8000000000001" width="4.6" height="4.6" fill="#0a0aff"/>
<rect x="527.3000000000001" y="666.1" width="4.6" height="4.6" fill="#0a0aff"/>
<rect x="527.3000000000001" y="733.3000000000001" width="4.6" height="4.6" fill="#0a0aff"/>
<text class="b" x="452.6" y="691.5" font-size="11.8" fill="#111" stroke="#111" stroke-width="0.25" textLength="15.7" lengthAdjust="spacingAndGlyphs">R9</text>
<text class="b" x="447.2" y="710.2" font-size="11.8" fill="#111" stroke="#111" stroke-width="0.25" textLength="21" lengthAdjust="spacingAndGlyphs">33k</text>
<text class="b" x="495.6" y="691.5" font-size="11.8" fill="#111" stroke="#111" stroke-width="0.25" textLength="22.6" lengthAdjust="spacingAndGlyphs">R10</text>
<text class="b" x="498.4" y="710.2" font-size="11.8" fill="#111" stroke="#111" stroke-width="0.25" textLength="20" lengthAdjust="spacingAndGlyphs">33k</text>
<path d="M590 764.7 L590 634.2 L623.5 634.2" fill="none" stroke="#4c4cff" stroke-width="1.3" stroke-linejoin="miter"/>
<path d="M590 718.4 L673.8 718.4" fill="none" stroke="#4c4cff" stroke-width="1.3" stroke-linejoin="miter"/>
<path d="M673.8 709.9 V726.9 M677.8 709.9 V726.9" stroke="#3535a0" stroke-width="1.3"/>
<path d="M677.8 718.4 L733.6 718.4 L733.6 643.3" fill="none" stroke="#4c4cff" stroke-width="1.3" stroke-linejoin="miter"/>
<path d="M590 744.2 L762.6 744.2" fill="none" stroke="#4c4cff" stroke-width="1.3" stroke-linejoin="miter"/>
<path d="M657 643.3 L762.6 643.3" fill="none" stroke="#4c4cff" stroke-width="1.3" stroke-linejoin="miter"/>
<path d="M665.6 643.3 L665.6 541 L682.7 541" fill="none" stroke="#4c4cff" stroke-width="1.3" stroke-linejoin="miter"/>
<path d="M640.5 592.3 L640.5 627.5" fill="none" stroke="#4c4cff" stroke-width="1.3" stroke-linejoin="miter"/>
<path d="M640.5 659 L640.5 685.6" fill="none" stroke="#4c4cff" stroke-width="1.3" stroke-linejoin="miter"/>
<path d="M623.5 626.5 L657 643.3 L623.5 660 Z" fill="none" stroke="#3535a0" stroke-width="1.05"/>
<path d="M640.5 627 V631.5 M640.5 655 V659" stroke="#3535a0" stroke-width="1.05"/>
<path d="M624.8 634.3 h4.6 M624.8 651.4 h4.6 M627.1 649.1 v4.6 M641.7 631.8 h4.6 M644 629.5 v4.6 M641.7 653.4 h4.6" stroke="#3535a0" stroke-width="1.1"/>
<rect x="587.7" y="716.1" width="4.6" height="4.6" fill="#0a0aff"/>
<rect x="587.7" y="741.9000000000001" width="4.6" height="4.6" fill="#0a0aff"/>
<rect x="663.3000000000001" y="641.0" width="4.6" height="4.6" fill="#0a0aff"/>
<rect x="731.3000000000001" y="641.0" width="4.6" height="4.6" fill="#0a0aff"/>
<text class="b" x="617" y="621" font-size="11.8" fill="#111" stroke="#111" stroke-width="0.25" textLength="13.7" lengthAdjust="spacingAndGlyphs">U1</text>
<text class="b" x="648.2" y="665.3" font-size="11.8" fill="#111" stroke="#111" stroke-width="0.25" textLength="43" lengthAdjust="spacingAndGlyphs">ne5532</text>
<text class="b" x="0" y="0" font-size="11.8" fill="#111" stroke="#111" stroke-width="0.25" textLength="19" lengthAdjust="spacingAndGlyphs" transform="translate(644.6 592.3) rotate(-90)">Vcc</text>
<text class="b" x="0" y="0" font-size="11.8" fill="#111" stroke="#111" stroke-width="0.25" textLength="18" lengthAdjust="spacingAndGlyphs" transform="translate(644.6 703.5) rotate(-90)">Vss</text>
<text class="b" x="666" y="707" font-size="11.8" fill="#111" stroke="#111" stroke-width="0.25" textLength="15.7" lengthAdjust="spacingAndGlyphs">C5</text>
<text class="b" x="663.3" y="737" font-size="11.8" fill="#111" stroke="#111" stroke-width="0.25" textLength="22" lengthAdjust="spacingAndGlyphs">22p</text>
<path d="M682.7 523.5 L649 523.5 L649 456.3 L750.3 456.3 L750.3 532.5" fill="none" stroke="#4c4cff" stroke-width="1.3" stroke-linejoin="miter"/>
<path d="M716.8 532.5 L771.8 532.5" fill="none" stroke="#4c4cff" stroke-width="1.3" stroke-linejoin="miter"/>
<path d="M699.7 489.8 L699.7 520" fill="none" stroke="#4c4cff" stroke-width="1.3" stroke-linejoin="miter"/>
<path d="M699.7 545 L699.7 575.6" fill="none" stroke="#4c4cff" stroke-width="1.3" stroke-linejoin="miter"/>
<path d="M682.7 515.5 L716.8 532.5 L682.7 549.6 Z" fill="none" stroke="#3535a0" stroke-width="1.05"/>
<path d="M684 523.5 h4.6 M684 541 h4.6 M686.3 538.7 v4.6 M701 521.5 h4.6 M703.3 519.2 v4.6 M701 543 h4.6" stroke="#3535a0" stroke-width="1.1"/>
<path d="M771.8 532.5 L776.2 524.0 L784.9 541.0 L793.7 524.0 L802.4 541.0 L806.8 532.5" fill="none" stroke="#3535a0" stroke-width="1.05"/>
<path d="M806.8 532.5 L826.1 532.5 L826.1 643.1" fill="none" stroke="#4c4cff" stroke-width="1.3" stroke-linejoin="miter"/>
<rect x="748.0" y="530.2" width="4.6" height="4.6" fill="#0a0aff"/>
<text class="b" x="676.8" y="510" font-size="11.8" fill="#111" stroke="#111" stroke-width="0.25" textLength="15" lengthAdjust="spacingAndGlyphs">U2</text>
<text class="b" x="705.5" y="564" font-size="11.8" fill="#111" stroke="#111" stroke-width="0.25" textLength="43" lengthAdjust="spacingAndGlyphs">ne5532</text>
<text class="b" x="0" y="0" font-size="11.8" fill="#111" stroke="#111" stroke-width="0.25" textLength="19" lengthAdjust="spacingAndGlyphs" transform="translate(703.7 489.8) rotate(-90)">Vcc</text>
<text class="b" x="0" y="0" font-size="11.8" fill="#111" stroke="#111" stroke-width="0.25" textLength="18" lengthAdjust="spacingAndGlyphs" transform="translate(703.7 593.5) rotate(-90)">Vss</text>
<text class="b" x="780.8" y="520" font-size="11.8" fill="#111" stroke="#111" stroke-width="0.25" textLength="14.9" lengthAdjust="spacingAndGlyphs">R5</text>
<text class="b" x="779" y="551.3" font-size="11.8" fill="#111" stroke="#111" stroke-width="0.25" textLength="18.5" lengthAdjust="spacingAndGlyphs">4.7</text>
<path d="M762.6 643.1 L767.0 634.6 L775.7 651.6 L784.5 634.6 L793.2 651.6 L797.6 643.1" fill="none" stroke="#3535a0" stroke-width="1.05"/>
<path d="M797.6 643.1 L847 643.1" fill="none" stroke="#4c4cff" stroke-width="1.3" stroke-linejoin="miter"/>
<path d="M847.0 643.1 L851.4 634.6 L860.1 651.6 L868.9 634.6 L877.6 651.6 L882.0 643.1" fill="none" stroke="#3535a0" stroke-width="1.05"/>
<path d="M882 643.1 L1013 643.1" fill="none" stroke="#4c4cff" stroke-width="1.3" stroke-linejoin="miter"/>
<rect x="823.8000000000001" y="640.8000000000001" width="4.6" height="4.6" fill="#0a0aff"/>
<rect x="901.3000000000001" y="640.8000000000001" width="4.6" height="4.6" fill="#0a0aff"/>
<rect x="951.8000000000001" y="640.8000000000001" width="4.6" height="4.6" fill="#0a0aff"/>
<rect x="994.0" y="640.8000000000001" width="4.6" height="4.6" fill="#0a0aff"/>
<text class="b" x="771.9" y="631.2" font-size="11.8" fill="#111" stroke="#111" stroke-width="0.25" textLength="15.9" lengthAdjust="spacingAndGlyphs">R4</text>
<text class="b" x="770.8" y="662.4" font-size="11.8" fill="#111" stroke="#111" stroke-width="0.25" textLength="18.3" lengthAdjust="spacingAndGlyphs">4.7</text>
<text class="b" x="856.7" y="631.2" font-size="11.8" fill="#111" stroke="#111" stroke-width="0.25" textLength="15.1" lengthAdjust="spacingAndGlyphs">R6</text>
<text class="b" x="860.6" y="662.4" font-size="11.8" fill="#111" stroke="#111" stroke-width="0.25" textLength="7.5" lengthAdjust="spacingAndGlyphs">0</text>
<path d="M903.6 643.1 L903.6 744.2 L797.6 744.2" fill="none" stroke="#4c4cff" stroke-width="1.3" stroke-linejoin="miter"/>
<path d="M762.6 744.2 L767.0 735.7 L775.7 752.7 L784.5 735.7 L793.2 752.7 L797.6 744.2" fill="none" stroke="#3535a0" stroke-width="1.05"/>
<text class="b" x="771.9" y="732.4" font-size="11.8" fill="#111" stroke="#111" stroke-width="0.25" textLength="15.9" lengthAdjust="spacingAndGlyphs">R1</text>
<text class="b" x="769" y="763.6" font-size="11.8" fill="#111" stroke="#111" stroke-width="0.25" textLength="21.6" lengthAdjust="spacingAndGlyphs">33k</text>
<path d="M590.0 764.7 L598.5 769.1 L581.5 777.8 L598.5 786.6 L581.5 795.3 L590.0 799.7" fill="none" stroke="#3535a0" stroke-width="1.05"/>
<path d="M590 799.7 L590 812" fill="none" stroke="#4c4cff" stroke-width="1.3" stroke-linejoin="miter"/>
<path d="M580.5 812 L599.5 812 L590 821.5 Z" fill="none" stroke="#4c4cff" stroke-width="1.25"/>
<text class="b" x="604.3" y="780.8" font-size="11.8" fill="#111" stroke="#111" stroke-width="0.25" textLength="14.9" lengthAdjust="spacingAndGlyphs">R2</text>
<text class="b" x="606" y="799.4" font-size="11.8" fill="#111" stroke="#111" stroke-width="0.25" textLength="21" lengthAdjust="spacingAndGlyphs">33k</text>
<path d="M954.1 643.1 L954.1 683.5" fill="none" stroke="#4c4cff" stroke-width="1.3" stroke-linejoin="miter"/>
<path d="M945.4 683.5 H962.8000000000001 M945.4 687.5 H962.8000000000001" stroke="#3535a0" stroke-width="1.3"/>
<path d="M954.1 687.5 L954.1 727.5" fill="none" stroke="#4c4cff" stroke-width="1.3" stroke-linejoin="miter"/>
<path d="M944.6 727.5 L963.6 727.5 L954.1 737.0 Z" fill="none" stroke="#4c4cff" stroke-width="1.25"/>
<path d="M996.3 643.1 L996.3 663.7" fill="none" stroke="#4c4cff" stroke-width="1.3" stroke-linejoin="miter"/>
<path d="M996.3 663.7 L1004.8 668.1 L987.8 676.8 L1004.8 685.6 L987.8 694.3 L996.3 698.7" fill="none" stroke="#3535a0" stroke-width="1.05"/>
<path d="M996.3 698.7 L996.3 727.5" fill="none" stroke="#4c4cff" stroke-width="1.3" stroke-linejoin="miter"/>
<path d="M986.8 727.5 L1005.8 727.5 L996.3 737.0 Z" fill="none" stroke="#4c4cff" stroke-width="1.25"/>
<text class="b" x="1013" y="647.6" font-size="11.8" fill="#111" stroke="#111" stroke-width="0.25" textLength="27.8" lengthAdjust="spacingAndGlyphs">Out1</text>
<text class="b" x="934" y="676.8" font-size="11.8" fill="#111" stroke="#111" stroke-width="0.25" textLength="14.3" lengthAdjust="spacingAndGlyphs">C2</text>
<text class="b" x="911.9" y="701.6" font-size="11.8" fill="#111" stroke="#111" stroke-width="0.25" textLength="37" lengthAdjust="spacingAndGlyphs">1200p</text>
<text class="b" x="1007" y="677" font-size="11.8" fill="#111" stroke="#111" stroke-width="0.25" textLength="15" lengthAdjust="spacingAndGlyphs">R3</text>
<text class="b" x="1007" y="696.4" font-size="11.8" fill="#111" stroke="#111" stroke-width="0.25" textLength="13.7" lengthAdjust="spacingAndGlyphs">64</text>
<text class="b" x="868.8" y="515.7" font-size="11.8" fill="#111" stroke="#111" stroke-width="0.25" textLength="115" lengthAdjust="spacingAndGlyphs">.inc NJM4580_v2.lib</text>
<text class="b" x="868.8" y="530.8" font-size="11.8" fill="#111" stroke="#111" stroke-width="0.25" textLength="89.8" lengthAdjust="spacingAndGlyphs">.inc NE5532.LIB</text>
<text class="b" x="868.8" y="545.2" font-size="11.8" fill="#111" stroke="#111" stroke-width="0.25" textLength="148.2" lengthAdjust="spacingAndGlyphs">.inc NL8802x_v0401_Z.lib</text>
<text class="b" x="868.8" y="560" font-size="11.8" fill="#111" stroke="#111" stroke-width="0.25" textLength="92.9" lengthAdjust="spacingAndGlyphs">.inc OPAx134.lib</text>
<text class="b" x="868.8" y="574.7" font-size="11.8" fill="#111" stroke="#111" stroke-width="0.25" textLength="112.7" lengthAdjust="spacingAndGlyphs">.inc njm4558_v2.lib</text>
<text class="b" x="868.8" y="589.4" font-size="11.8" fill="#111" stroke="#111" stroke-width="0.25" textLength="112.7" lengthAdjust="spacingAndGlyphs">.inc njm2068_v2.lib</text>
<rect x="1134.5" y="473.5" width="282" height="249" rx="7" fill="#000" opacity="0.06"/>
<rect x="1136.5" y="475.5" width="277" height="243" rx="6" fill="#f0f0f0" stroke="#c4c4c4" stroke-width="1"/>
<path d="M1137 502 V482 Q1137 476 1143 476 H1407 Q1413 476 1413 482 V502 Z" fill="#f3f3f3"/>
<path d="M1147.8 483.3 L1144.6 481.5 V495.5 L1155.5 488.7" fill="none" stroke="#222" stroke-width="1.1"/>
<path d="M1146 488.6 L1150.5 481.5 L1152 481.5 L1149.6 486.2 L1152.6 486.2 L1151.6 488.6 Z M1151.5 481.5 L1158.5 481.5 L1157.5 483.3 L1155.2 483.3 L1153.3 488.5 L1151.8 488.5 L1153.6 483.3 L1151 483.3 Z" fill="#a00808"/>
<text x="1164.4" y="493.6" font-size="12" fill="#1a1a1a" textLength="148.3" lengthAdjust="spacingAndGlyphs">NJM4580_amp_03_A47_02.asc</text>
<path d="M1394.5 484.5 L1403.5 493.5 M1403.5 484.5 L1394.5 493.5" stroke="#222" stroke-width="1.1"/>
<line x1="1137" y1="508.2" x2="1413" y2="508.2" stroke="#dcdcdc" stroke-width="1"/>
<line x1="1137" y1="509.2" x2="1413" y2="509.2" stroke="#fafafa" stroke-width="1"/>
<rect x="1141.5" y="502.2" width="42.7" height="10" fill="#f0f0f0"/>
<text x="1144.5" y="511.2" font-size="9.2" fill="#303030" textLength="36.7" lengthAdjust="spacingAndGlyphs">Cursor 1</text>
<text x="1243" y="521" font-size="9.2" fill="#303030" textLength="33" lengthAdjust="spacingAndGlyphs">V(out1 )</text>
<text x="1142" y="537.8" font-size="9.2" fill="#303030" textLength="21.7" lengthAdjust="spacingAndGlyphs">Freq:</text>
<rect x="1168.2" y="528" width="84.09999999999991" height="14.5" fill="#fff"/>
<path d="M1168.2 542.0 H1251.8 V528" fill="none" stroke="#9a9a9a" stroke-width="1"/>
<text x="1210.2" y="537.8" font-size="9.2" fill="#111" textLength="65.8" lengthAdjust="spacingAndGlyphs" text-anchor="middle">7.9617787MHz</text>
<text x="1268.7" y="537.8" font-size="9.2" fill="#303030" textLength="19.3" lengthAdjust="spacingAndGlyphs">Mag:</text>
<text x="1259" y="554.8" font-size="9.2" fill="#303030" textLength="29.3" lengthAdjust="spacingAndGlyphs">Phase:</text>
<text x="1233.3" y="571.5" font-size="9.2" fill="#303030" textLength="54.9" lengthAdjust="spacingAndGlyphs">Group Delay:</text>
<rect x="1294" y="527" width="100.5" height="15" fill="#fff"/>
<path d="M1294.5 542 V527.5 H1394.5" fill="none" stroke="#6a6a6a" stroke-width="1"/>
<path d="M1294 541.5 H1394.0 V527" fill="none" stroke="#e0e0e0" stroke-width="1"/>
<text x="1344.2" y="537.8" font-size="9.2" fill="#1a1a33" textLength="56" lengthAdjust="spacingAndGlyphs" text-anchor="middle">-10.560632dB</text>
<rect x="1294" y="544" width="100.5" height="15" fill="#fff"/>
<path d="M1294.5 559 V544.5 H1394.5" fill="none" stroke="#6a6a6a" stroke-width="1"/>
<path d="M1294 558.5 H1394.0 V544" fill="none" stroke="#e0e0e0" stroke-width="1"/>
<text x="1344.2" y="554.8" font-size="9.2" fill="#1a1a33" textLength="48.4" lengthAdjust="spacingAndGlyphs" text-anchor="middle">-164.52162°</text>
<rect x="1294" y="561" width="100.5" height="15" fill="#fff"/>
<path d="M1294 575.5 H1394.0 V561" fill="none" stroke="#9a9a9a" stroke-width="1"/>
<text x="1344.2" y="571.8" font-size="9.2" fill="#1a1a33" textLength="57" lengthAdjust="spacingAndGlyphs" text-anchor="middle">26.059306ns</text>
<circle cx="1404.2" cy="535.5" r="5.8" fill="#1a5fc0"/><circle cx="1404.2" cy="535.5" r="2.2" fill="#fff"/>
<circle cx="1404.2" cy="551.8" r="5.3" fill="#fafafa" stroke="#555" stroke-width="1.1"/>
<circle cx="1404.2" cy="568.6" r="5.3" fill="#f6f6f6" stroke="#d0d0d0" stroke-width="1"/>
<line x1="1137" y1="577.5" x2="1413" y2="577.5" stroke="#d8d8d8" stroke-width="1"/>
<line x1="1137" y1="584" x2="1413" y2="584" stroke="#dcdcdc" stroke-width="1"/>
<line x1="1137" y1="585" x2="1413" y2="585" stroke="#fafafa" stroke-width="1"/>
<rect x="1141.5" y="578" width="42.7" height="10" fill="#f0f0f0"/>
<text x="1144.5" y="587" font-size="9.2" fill="#303030" textLength="36.7" lengthAdjust="spacingAndGlyphs">Cursor 2</text>
<text x="1243" y="595.3" font-size="9.2" fill="#303030" textLength="33" lengthAdjust="spacingAndGlyphs">V(out1 )</text>
<text x="1142" y="612.5999999999999" font-size="9.2" fill="#303030" textLength="21.7" lengthAdjust="spacingAndGlyphs">Freq:</text>
<rect x="1168.2" y="602.8" width="84.09999999999991" height="14.5" fill="#fff"/>
<path d="M1168.2 616.8 H1251.8 V602.8" fill="none" stroke="#9a9a9a" stroke-width="1"/>
<text x="1210.2" y="612.5999999999999" font-size="9.2" fill="#111" textLength="65.8" lengthAdjust="spacingAndGlyphs" text-anchor="middle">9.2396722MHz</text>
<text x="1268.7" y="612.5999999999999" font-size="9.2" fill="#303030" textLength="19.3" lengthAdjust="spacingAndGlyphs">Mag:</text>
<text x="1259" y="629.5999999999999" font-size="9.2" fill="#303030" textLength="29.3" lengthAdjust="spacingAndGlyphs">Phase:</text>
<text x="1233.3" y="646.3" font-size="9.2" fill="#303030" textLength="54.9" lengthAdjust="spacingAndGlyphs">Group Delay:</text>
<rect x="1294" y="601.8" width="100.5" height="15.0" fill="#fff"/>
<path d="M1294.5 616.8 V602.3 H1394.5" fill="none" stroke="#6a6a6a" stroke-width="1"/>
<path d="M1294 616.3 H1394.0 V601.8" fill="none" stroke="#e0e0e0" stroke-width="1"/>
<text x="1344.2" y="612.5999999999999" font-size="9.2" fill="#1a1a33" textLength="56" lengthAdjust="spacingAndGlyphs" text-anchor="middle">-13.474332dB</text>
<rect x="1294" y="618.8" width="100.5" height="15.0" fill="#fff"/>
<path d="M1294.5 633.8 V619.3 H1394.5" fill="none" stroke="#6a6a6a" stroke-width="1"/>
<path d="M1294 633.3 H1394.0 V618.8" fill="none" stroke="#e0e0e0" stroke-width="1"/>
<text x="1344.2" y="629.5999999999999" font-size="9.2" fill="#1a1a33" textLength="49.3" lengthAdjust="spacingAndGlyphs" text-anchor="middle">-174.97951°</text>
<rect x="1294" y="635.8" width="100.5" height="15.0" fill="#fff"/>
<path d="M1294 650.3 H1394.0 V635.8" fill="none" stroke="#9a9a9a" stroke-width="1"/>
<text x="1344.2" y="646.5999999999999" font-size="9.2" fill="#1a1a33" textLength="57" lengthAdjust="spacingAndGlyphs" text-anchor="middle">19.926212ns</text>
<circle cx="1404.2" cy="608.8" r="5.8" fill="#1a5fc0"/><circle cx="1404.2" cy="608.8" r="2.2" fill="#fff"/>
<circle cx="1404.2" cy="625.0999999999999" r="5.3" fill="#fafafa" stroke="#555" stroke-width="1.1"/>
<circle cx="1404.2" cy="641.9" r="5.3" fill="#f6f6f6" stroke="#d0d0d0" stroke-width="1"/>
<line x1="1137" y1="652.5" x2="1413" y2="652.5" stroke="#d8d8d8" stroke-width="1"/>
<line x1="1137" y1="659.5" x2="1413" y2="659.5" stroke="#dcdcdc" stroke-width="1"/>
<line x1="1137" y1="660.5" x2="1413" y2="660.5" stroke="#fafafa" stroke-width="1"/>
<rect x="1215" y="653.5" width="120" height="10" fill="#f0f0f0"/>
<text x="1218" y="662.5" font-size="9.2" fill="#303030" textLength="114" lengthAdjust="spacingAndGlyphs">Ratio (Cursor2 / Cursor1 )</text>
<text x="1142" y="678.5999999999999" font-size="9.2" fill="#303030" textLength="21.7" lengthAdjust="spacingAndGlyphs">Freq:</text>
<rect x="1168.2" y="668.8" width="84.09999999999991" height="14.5" fill="#fff"/>
<path d="M1168.2 682.8 H1251.8 V668.8" fill="none" stroke="#9a9a9a" stroke-width="1"/>
<text x="1210.2" y="678.5999999999999" font-size="9.2" fill="#111" textLength="65.8" lengthAdjust="spacingAndGlyphs" text-anchor="middle">1.2778936MHz</text>
<text x="1268.7" y="678.5999999999999" font-size="9.2" fill="#303030" textLength="19.3" lengthAdjust="spacingAndGlyphs">Mag:</text>
<text x="1259" y="695.5999999999999" font-size="9.2" fill="#303030" textLength="29.3" lengthAdjust="spacingAndGlyphs">Phase:</text>
<text x="1233.3" y="712.3" font-size="9.2" fill="#303030" textLength="54.9" lengthAdjust="spacingAndGlyphs">Group Delay:</text>
<rect x="1294" y="667.8" width="100.5" height="15.0" fill="#fff"/>
<path d="M1294 682.3 H1394.0 V667.8" fill="none" stroke="#9a9a9a" stroke-width="1"/>
<text x="1344.2" y="678.5999999999999" font-size="9.2" fill="#1a1a33" textLength="46.5" lengthAdjust="spacingAndGlyphs" text-anchor="middle">−2.9137dB</text>
<rect x="1294" y="684.8" width="100.5" height="15.0" fill="#fff"/>
<path d="M1294 699.3 H1394.0 V684.8" fill="none" stroke="#9a9a9a" stroke-width="1"/>
<text x="1344.2" y="695.5999999999999" font-size="9.2" fill="#1a1a33" textLength="56.1" lengthAdjust="spacingAndGlyphs" text-anchor="middle">−10.457889°</text>
<rect x="1294" y="701.8" width="100.5" height="15.0" fill="#fff"/>
<path d="M1294 716.3 H1394.0 V701.8" fill="none" stroke="#9a9a9a" stroke-width="1"/>
<text x="1344.2" y="712.5999999999999" font-size="9.2" fill="#1a1a33" textLength="62.9" lengthAdjust="spacingAndGlyphs" text-anchor="middle">−6.1330942ns</text>
</svg></body></html>
